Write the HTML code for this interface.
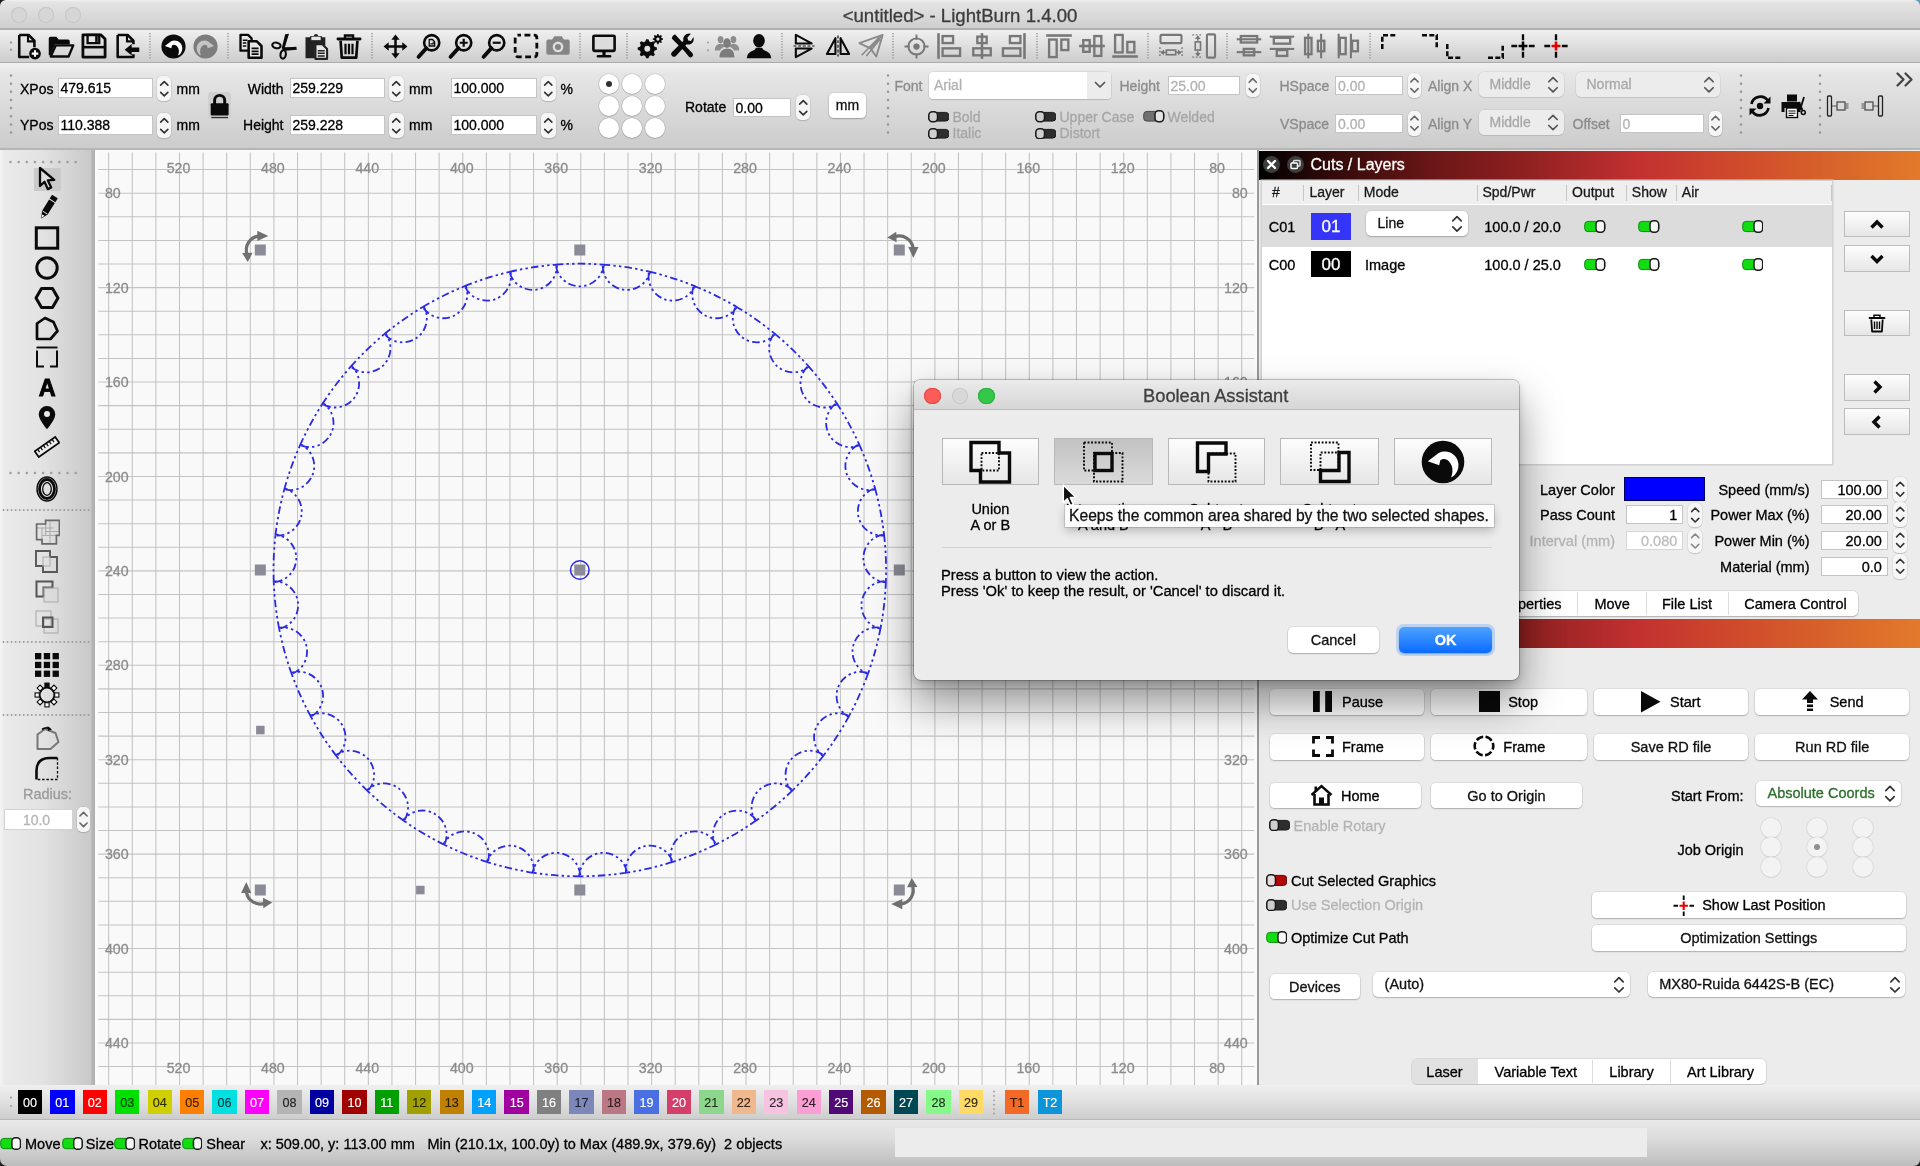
<!DOCTYPE html>
<html lang="en"><head><meta charset="utf-8"><title>&lt;untitled&gt; - LightBurn 1.4.00</title>
<style>
html,body{margin:0;padding:0;}
body{width:1920px;height:1166px;overflow:hidden;background:#ececec;font-family:"Liberation Sans",sans-serif;font-size:14px;color:#000;position:relative;}
#root{position:absolute;left:0;top:0;width:1920px;height:1166px;overflow:hidden;will-change:transform;transform:translateZ(0);}
#root div,#root svg{position:absolute;}
.t{white-space:nowrap;-webkit-text-stroke:0.3px currentColor;}
</style></head>
<body><div id="root">
<div style="left:0px;top:0px;width:1920px;height:28.5px;background:linear-gradient(#f2f2f2 0,#e4e4e4 2px,#d0d0d0 27px);"></div>
<div style="left:0px;top:28.3px;width:1920px;height:1.5px;background:#b0b0b0;"></div>
<div style="left:10.75px;top:7px;width:16px;height:16px;border-radius:50%;background:#d6d6d6;box-shadow:inset 0 0 0 1px #c6c6c6;"></div>
<div style="left:38.25px;top:7px;width:16px;height:16px;border-radius:50%;background:#d6d6d6;box-shadow:inset 0 0 0 1px #c6c6c6;"></div>
<div style="left:65.2px;top:7px;width:16px;height:16px;border-radius:50%;background:#d6d6d6;box-shadow:inset 0 0 0 1px #c6c6c6;"></div>
<div class="t" style="top:3.5px;height:24px;line-height:24px;font-size:18.6px;color:#3c3c3c;left:660px;width:600px;text-align:center;">&lt;untitled&gt; - LightBurn 1.4.00</div>
<div style="left:0px;top:29.8px;width:1920px;height:32.2px;background:linear-gradient(#efefef,#e4e4e4 35%,#cdcdcd);"></div>
<div style="left:0px;top:61.8px;width:1920px;height:1.3px;background:#ababab;"></div>
<div style="left:0px;top:63.1px;width:1920px;height:85px;background:linear-gradient(#f1f1f1 0,#e6e6e6 12%,#cccccc 100%);"></div>
<div style="left:0px;top:148px;width:1920px;height:2px;background:#b6b6b6;"></div>
<svg style="left:8.8px;top:40.7px;" width="4" height="10.4" viewBox="0 0 4 10.4"><circle cx="2" cy="1.5" r="1.2" fill="#a0a0a0"/><circle cx="2" cy="8.8" r="1.2" fill="#a0a0a0"/></svg>
<svg style="left:14px;top:32px;" width="28" height="28" viewBox="0 0 24 24"><path d="M4.5 2.5h8l5 5v5.5" fill="none" stroke="#0a0a0a" stroke-width="2.2" stroke-linejoin="round"/><path d="M4.5 2.5v19h8.5" fill="none" stroke="#0a0a0a" stroke-width="2.2" stroke-linejoin="round"/><path d="M12 2.5v5.5h5.5" fill="none" stroke="#0a0a0a" stroke-width="1.8"/><circle cx="18" cy="18.5" r="5" fill="#0a0a0a"/><path d="M18 15.7v5.6M15.2 18.5h5.6" stroke="#fff" stroke-width="1.8"/></svg>
<svg style="left:47px;top:32px;" width="28" height="28" viewBox="0 0 24 24"><path d="M1.5 20V5.5q0-1.5 1.5-1.5h5l2 2.5h8q1.5 0 1.5 1.5v2.5H7L3 20z" fill="#0a0a0a"/><path d="M7.5 11.5h15L18.5 21H3.2z" fill="none" stroke="#0a0a0a" stroke-width="2" stroke-linejoin="round"/></svg>
<svg style="left:80px;top:32px;" width="28" height="28" viewBox="0 0 24 24"><path d="M2.5 2.5h15.5l3.5 3.5v15.5h-19z" fill="none" stroke="#0a0a0a" stroke-width="2.4" stroke-linejoin="round"/><path d="M6.5 2.5h10v7h-10z" fill="none" stroke="#0a0a0a" stroke-width="2"/><rect x="13" y="3.5" width="2.2" height="5" fill="#0a0a0a"/><path d="M3 13h18" stroke="#0a0a0a" stroke-width="2.2"/></svg>
<svg style="left:113px;top:32px;" width="28" height="28" viewBox="0 0 24 24"><path d="M4 2.5h8.5l5 5v3" fill="none" stroke="#0a0a0a" stroke-width="2.2" stroke-linejoin="round"/><path d="M4 2.5v19h13.5v-2.5" fill="none" stroke="#0a0a0a" stroke-width="2.2" stroke-linejoin="round"/><path d="M12 2.5v5.5h5.5" fill="none" stroke="#0a0a0a" stroke-width="1.8"/><path d="M10 15.2l6-5v3h6.5v4H16v3z" fill="#0a0a0a"/></svg>
<svg style="left:148.5px;top:33px;" width="2" height="26" viewBox="0 0 2 26"><path d="M1 0v26" stroke="#8e8e8e" stroke-width="1.300" stroke-dasharray="1.200 1.500"/></svg>
<svg style="left:160.5px;top:33.5px;" width="25" height="25" viewBox="0 0 24 24"><circle cx="12" cy="12" r="11.600" fill="#0a0a0a"/><path d="M3.71 11.62L9.44 7.20C12.00 5.73 16.09 6.00 18.55 8.73C20.73 11.18 21.00 14.73 19.64 17.18C18.82 18.82 17.73 19.91 16.42 20.51C17.18 18.55 17.45 16.36 16.80 14.24C16.09 12.00 14.45 10.47 12.76 10.31C12.00 10.25 11.18 10.53 10.53 11.02L9.93 13.75Z" fill="#fff"/></svg>
<svg style="left:193px;top:33.5px;" width="25" height="25" viewBox="0 0 24 24"><circle cx="12" cy="12" r="11.600" fill="#7d7d7d"/><path d="M20.29 11.62 L14.56 7.20 C12.00 5.73 7.91 6.00 5.45 8.73 C3.27 11.18 3.00 14.73 4.36 17.18 C5.18 18.82 6.27 19.91 7.58 20.51 C6.82 18.55 6.55 16.36 7.20 14.24 C7.91 12.00 9.55 10.47 11.24 10.31 C12.00 10.25 12.82 10.53 13.47 11.02 L14.07 13.75 Z" fill="#c4c4c4"/></svg>
<svg style="left:227px;top:33px;" width="2" height="26" viewBox="0 0 2 26"><path d="M1 0v26" stroke="#8e8e8e" stroke-width="1.300" stroke-dasharray="1.200 1.500"/></svg>
<svg style="left:237px;top:32px;" width="28" height="28" viewBox="0 0 24 24"><path d="M3 2.5h6.5l3 3V16H3z" fill="#e6e6e6" stroke="#0a0a0a" stroke-width="2" stroke-linejoin="round"/><path d="M10 8h7l4 4v10H10z" fill="#e6e6e6" stroke="#0a0a0a" stroke-width="2.2" stroke-linejoin="round"/><path d="M12.5 14h6M12.5 16.5h6M12.5 19h6" stroke="#0a0a0a" stroke-width="1.5"/><path d="M5 7h4M5 9.5h3M5 12h3" stroke="#0a0a0a" stroke-width="1.3"/></svg>
<svg style="left:270px;top:32px;" width="28" height="28" viewBox="0 0 24 24"><path d="M15.5 1.5 L12.5 13 L10.5 13.5 z" fill="#0a0a0a"/><path d="M22.5 13.5 L11 15.2 L10.5 13 z" fill="#0a0a0a"/><path d="M13 2 L16.3 1.6 L12.2 14.5 L10 14 z" fill="#0a0a0a"/><path d="M22.6 12.6 L23 15.3 L11 16.2 L10.5 13.5 z" fill="#0a0a0a"/><ellipse cx="5.5" cy="11.5" rx="3.6" ry="2.4" fill="none" stroke="#0a0a0a" stroke-width="1.8" transform="rotate(12 5.5 11.5)"/><ellipse cx="11.3" cy="19.2" rx="2.3" ry="3.6" fill="none" stroke="#0a0a0a" stroke-width="1.8" transform="rotate(8 11.3 19.2)"/></svg>
<svg style="left:302px;top:32px;" width="28" height="28" viewBox="0 0 24 24"><path d="M3 4.5h4v-1h3.2a1.8 1.8 0 0 1 3.6 0H17v1h3v7h-9v11H3z" fill="#222"/><rect x="8" y="4" width="8" height="3" fill="#e6e6e6"/><path d="M11.5 10.5h6l4 4V23h-10z" fill="#e6e6e6" stroke="#222" stroke-width="1.8" stroke-linejoin="round"/><path d="M13.5 16h6M13.5 18.3h6M13.5 20.6h6" stroke="#222" stroke-width="1.3"/></svg>
<svg style="left:335px;top:32px;" width="28" height="28" viewBox="0 0 24 24"><path d="M2.5 6h19" stroke="#0a0a0a" stroke-width="2.4" stroke-linecap="round"/><path d="M8.5 5.5v-2.5h7v2.5" fill="none" stroke="#0a0a0a" stroke-width="2"/><path d="M4.8 7.5l1 14.5h12.4l1-14.5" fill="none" stroke="#0a0a0a" stroke-width="2.3" stroke-linejoin="round"/><path d="M9 10v9M12 10v9M15 10v9" stroke="#0a0a0a" stroke-width="1.9"/></svg>
<svg style="left:370.5px;top:33px;" width="2" height="26" viewBox="0 0 2 26"><path d="M1 0v26" stroke="#8e8e8e" stroke-width="1.300" stroke-dasharray="1.200 1.500"/></svg>
<svg style="left:382.5px;top:33.5px;" width="25" height="25" viewBox="0 0 24 24"><path d="M12 3.5v17M3.5 12h17" stroke="#0a0a0a" stroke-width="2.4"/><path d="M12 0.5l4 5h-8zM12 23.5l4-5h-8zM0.5 12l5-4v8zM23.5 12l-5-4v8z" fill="#0a0a0a"/></svg>
<svg style="left:415.5px;top:33px;" width="26" height="26" viewBox="0 0 24 24"><circle cx="14.5" cy="9" r="7" fill="none" stroke="#0a0a0a" stroke-width="2.4"/><path d="M9.5 14l-7 8" stroke="#0a0a0a" stroke-width="3.6" stroke-linecap="round"/><path d="M12.2 6h3l2 2v4h-5z" fill="none" stroke="#0a0a0a" stroke-width="1.2"/><path d="M13.3 10h2.6v-2" fill="none" stroke="#0a0a0a" stroke-width="1"/></svg>
<svg style="left:448px;top:33px;" width="26" height="26" viewBox="0 0 24 24"><circle cx="14.5" cy="9" r="7" fill="none" stroke="#0a0a0a" stroke-width="2.4"/><path d="M9.5 14l-7 8" stroke="#0a0a0a" stroke-width="3.6" stroke-linecap="round"/><path d="M10.8 9h7.4M14.5 5.3v7.4" stroke="#0a0a0a" stroke-width="2"/></svg>
<svg style="left:480.5px;top:33px;" width="26" height="26" viewBox="0 0 24 24"><circle cx="14.5" cy="9" r="7" fill="none" stroke="#0a0a0a" stroke-width="2.4"/><path d="M9.5 14l-7 8" stroke="#0a0a0a" stroke-width="3.6" stroke-linecap="round"/><path d="M10.8 9h7.4" stroke="#0a0a0a" stroke-width="2"/></svg>
<svg style="left:512.7px;top:33px;" width="26" height="26" viewBox="0 0 24 24"><rect x="2" y="2" width="20" height="20" rx="2.5" fill="none" stroke="#0a0a0a" stroke-width="2.6" stroke-dasharray="5.4 3.2" stroke-dashoffset="2.5"/></svg>
<svg style="left:544px;top:32px;" width="28" height="28" viewBox="0 0 24 24"><path d="M2 8q0-1.5 1.5-1.5H7l1.8-2.8h6.4L17 6.5h3.5Q22 6.500 22 8v10q0 1.500 -1.500 1.500h-17Q2 19.500 2 18z" fill="#858585"/><circle cx="12" cy="12.8" r="4.6" fill="#dedede"/><circle cx="12" cy="12.8" r="2.6" fill="#858585"/></svg>
<svg style="left:579px;top:33px;" width="2" height="26" viewBox="0 0 2 26"><path d="M1 0v26" stroke="#8e8e8e" stroke-width="1.300" stroke-dasharray="1.200 1.500"/></svg>
<svg style="left:590.8px;top:33px;" width="26" height="26" viewBox="0 0 24 24"><rect x="2.2" y="2.500" width="19.6" height="14" rx="1" fill="#dcdcdc" stroke="#0a0a0a" stroke-width="2.4"/><path d="M12 17v3.500" stroke="#0a0a0a" stroke-width="3"/><path d="M6.500 21.500h11" stroke="#0a0a0a" stroke-width="2.4" stroke-linecap="round"/></svg>
<svg style="left:625.5px;top:33px;" width="2" height="26" viewBox="0 0 2 26"><path d="M1 0v26" stroke="#8e8e8e" stroke-width="1.300" stroke-dasharray="1.200 1.500"/></svg>
<svg style="left:636.5px;top:33px;" width="26" height="26" viewBox="0 0 24 24"><path d="M18.34 13.45 L18.34 15.55 L16.14 16.37 L15.52 17.87 L16.49 20.01 L15.01 21.49 L12.87 20.52 L11.37 21.14 L10.55 23.34 L8.45 23.34 L7.63 21.14 L6.13 20.52 L3.99 21.49 L2.51 20.01 L3.48 17.87 L2.86 16.37 L0.66 15.55 L0.66 13.45 L2.86 12.63 L3.48 11.13 L2.51 8.99 L3.99 7.51 L6.13 8.48 L7.63 7.86 L8.45 5.66 L10.55 5.66 L11.37 7.86 L12.87 8.48 L15.01 7.51 L16.49 8.99 L15.52 11.13 L16.14 12.63z" fill="#0a0a0a"/><circle cx="9.5" cy="14.5" r="2.7" fill="#e0e0e0"/><path d="M23.97 5.05 L23.97 6.15 L22.67 6.55 L22.35 7.31 L22.99 8.51 L22.21 9.29 L21.01 8.65 L20.25 8.97 L19.85 10.27 L18.75 10.27 L18.35 8.97 L17.59 8.65 L16.39 9.29 L15.61 8.51 L16.25 7.31 L15.93 6.55 L14.63 6.15 L14.63 5.05 L15.93 4.65 L16.25 3.89 L15.61 2.69 L16.39 1.91 L17.59 2.55 L18.35 2.23 L18.75 0.93 L19.85 0.93 L20.25 2.23 L21.01 2.55 L22.21 1.91 L22.99 2.69 L22.35 3.89 L22.67 4.65z" fill="#0a0a0a"/><circle cx="19.3" cy="5.6" r="1.5" fill="#e0e0e0"/></svg>
<svg style="left:668px;top:32px;" width="28" height="28" viewBox="0 0 24 24"><path d="M4 3.500l2-1.500 11.500 12.500 3.500 3.800q1.200 1.700 -0.300 3t-3-0.300L14.500 17 3.200 5.500z" fill="#0a0a0a"/><path d="M21.800 4.200q1 3.800-1.800 5.800-1.800 1.200-4 0.600L6.800 20.500q-1.600 1.600-3.300 0t0-3.300L13.200 7.500q-0.600-2.800 1.200-4.700 2.200-2 5.200-1.200l-3 3.400 0.800 2.200 2.300 0.500z" fill="#0a0a0a"/></svg>
<svg style="left:706px;top:40.5px;" width="4" height="11" viewBox="0 0 4 11"><circle cx="2" cy="1.5" r="1.1" fill="#a0a0a0"/><circle cx="2" cy="9.3" r="1.1" fill="#a0a0a0"/></svg>
<svg style="left:713px;top:32px;" width="28" height="28" viewBox="0 0 24 24"><ellipse cx="6.5" cy="6.5" rx="2.465" ry="3.145" fill="#8e8e8e"/><path d="M1.5700000000000003 15.85 q0 -5.5249999999999995 4.93 -5.779999999999999 q4.93 0 4.93 5.779999999999999 z" fill="#8e8e8e"/><ellipse cx="17.5" cy="6.5" rx="2.465" ry="3.145" fill="#8e8e8e"/><path d="M12.57 15.85 q0 -5.5249999999999995 4.93 -5.779999999999999 q4.93 0 4.93 5.779999999999999 z" fill="#8e8e8e"/><path d="M5.500 21.500q0-8 6.500-8.500q6.500 0.500 6.500 8.500z" fill="#dcdcdc" stroke="#dcdcdc" stroke-width="1.600"/><ellipse cx="12" cy="9.5" rx="3.248" ry="4.144000000000001" fill="#7c7c7c"/><path d="M5.504 21.82 q0 -7.280000000000001 6.496 -7.6160000000000005 q6.496 0 6.496 7.6160000000000005 z" fill="#7c7c7c"/></svg>
<svg style="left:745px;top:32px;" width="28" height="28" viewBox="0 0 24 24"><ellipse cx="12" cy="7.500" rx="5" ry="5.800" fill="#0a0a0a"/><path d="M1.500 22.500q0-5 6.500-7l1.500-2h5l1.500 2q6.500 2 6.500 7z" fill="#0a0a0a"/></svg>
<svg style="left:781px;top:33px;" width="2" height="26" viewBox="0 0 2 26"><path d="M1 0v26" stroke="#8e8e8e" stroke-width="1.300" stroke-dasharray="1.200 1.500"/></svg>
<svg style="left:790px;top:32px;" width="28" height="28" viewBox="0 0 24 24"><path d="M5 2.500l13.500 7.300h-13.500z" fill="none" stroke="#0a0a0a" stroke-width="1.800" stroke-linejoin="round"/><path d="M5 21.500l13.500-7.300h-13.500z" fill="none" stroke="#0a0a0a" stroke-width="1.800" stroke-linejoin="round"/><path d="M3 12h18" stroke="#0a0a0a" stroke-width="1" stroke-dasharray="2.500 1.500"/></svg>
<svg style="left:824px;top:32px;" width="28" height="28" viewBox="0 0 24 24"><path d="M2.500 18.800l7.300-13.500v13.500z" fill="none" stroke="#0a0a0a" stroke-width="1.800" stroke-linejoin="round"/><path d="M21.500 18.800l-7.300-13.500v13.500z" fill="none" stroke="#0a0a0a" stroke-width="1.800" stroke-linejoin="round"/><path d="M12 3v18" stroke="#0a0a0a" stroke-width="1" stroke-dasharray="2.500 1.500"/></svg>
<svg style="left:857px;top:32px;" width="28" height="28" viewBox="0 0 24 24"><path d="M2 9.500L22 2.500 16.500 21 11.500 14z" fill="none" stroke="#8a8a8a" stroke-width="1.600" stroke-linejoin="round"/><path d="M22 2.500L11.500 14M19 4.500L4 20M20 6L8 20.500" stroke="#8a8a8a" stroke-width="1.300"/></svg>
<svg style="left:892px;top:33px;" width="2" height="26" viewBox="0 0 2 26"><path d="M1 0v26" stroke="#8e8e8e" stroke-width="1.300" stroke-dasharray="1.200 1.500"/></svg>
<svg style="left:903.8px;top:33.5px;" width="25" height="25" viewBox="0 0 24 24"><circle cx="12" cy="12" r="7.800" fill="none" stroke="#777" stroke-width="1.800"/><circle cx="12" cy="12" r="3" fill="#777"/><path d="M12 0.500v5M12 18.500v5M0.500 12h5M18.500 12h5" stroke="#777" stroke-width="1.800"/></svg>
<svg style="left:935px;top:32px;" width="28" height="28" viewBox="0 0 24 24"><path d="M3 1v22" stroke="#777" stroke-width="2.200"/><rect x="6.5" y="3.5" width="9" height="6" fill="none" stroke="#777" stroke-width="2"/><rect x="6.5" y="14" width="15" height="6.5" fill="none" stroke="#777" stroke-width="2"/></svg>
<svg style="left:968px;top:32px;" width="28" height="28" viewBox="0 0 24 24"><path d="M12 1v22" stroke="#777" stroke-width="2.200"/><rect x="8" y="4" width="8" height="5.5" fill="none" stroke="#777" stroke-width="2"/><rect x="4.5" y="14" width="15" height="6" fill="none" stroke="#777" stroke-width="2"/></svg>
<svg style="left:1000px;top:32px;" width="28" height="28" viewBox="0 0 24 24"><path d="M21 1v22" stroke="#777" stroke-width="2.200"/><rect x="8.5" y="3.5" width="9" height="6" fill="none" stroke="#777" stroke-width="2"/><rect x="2.5" y="14" width="15" height="6.5" fill="none" stroke="#777" stroke-width="2"/></svg>
<svg style="left:1035.5px;top:33px;" width="2" height="26" viewBox="0 0 2 26"><path d="M1 0v26" stroke="#8e8e8e" stroke-width="1.300" stroke-dasharray="1.200 1.500"/></svg>
<svg style="left:1045px;top:32px;" width="28" height="28" viewBox="0 0 24 24"><path d="M1 3h22" stroke="#777" stroke-width="2.200"/><rect x="3.5" y="6.5" width="6.5" height="15" fill="none" stroke="#777" stroke-width="2"/><rect x="14" y="6.5" width="6" height="9" fill="none" stroke="#777" stroke-width="2"/></svg>
<svg style="left:1078px;top:32px;" width="28" height="28" viewBox="0 0 24 24"><path d="M1 12h22" stroke="#777" stroke-width="2.200"/><rect x="4.5" y="7" width="5.5" height="10" fill="none" stroke="#777" stroke-width="2"/><rect x="14" y="3.5" width="6" height="17" fill="none" stroke="#777" stroke-width="2"/></svg>
<svg style="left:1111px;top:32px;" width="28" height="28" viewBox="0 0 24 24"><path d="M1 21h22" stroke="#777" stroke-width="2.200"/><rect x="3.5" y="2.5" width="6.5" height="15" fill="none" stroke="#777" stroke-width="2"/><rect x="14" y="8.5" width="6" height="9" fill="none" stroke="#777" stroke-width="2"/></svg>
<svg style="left:1146.5px;top:33px;" width="2" height="26" viewBox="0 0 2 26"><path d="M1 0v26" stroke="#8e8e8e" stroke-width="1.300" stroke-dasharray="1.200 1.500"/></svg>
<svg style="left:1157px;top:32px;" width="28" height="28" viewBox="0 0 24 24"><rect x="3" y="2.500" width="18" height="7" rx="1" fill="none" stroke="#777" stroke-width="1.800"/><path d="M2.500 13v9M21.500 13v9" stroke="#777" stroke-width="1.200" stroke-dasharray="1.500 1.500"/><rect x="8" y="15.500" width="8" height="4" fill="none" stroke="#777" stroke-width="1.400"/><path d="M3.500 17.500h4M20.500 17.500h-4" stroke="#777" stroke-width="1.400"/><path d="M3 17.500l3-2.500v5zM21 17.500l-3-2.500v5z" fill="#777"/></svg>
<svg style="left:1190px;top:32px;" width="28" height="28" viewBox="0 0 24 24"><rect x="14.500" y="2" width="7" height="20" rx="1" fill="none" stroke="#777" stroke-width="1.800"/><path d="M2 2.500h9M2 21.500h9" stroke="#777" stroke-width="1.200" stroke-dasharray="1.500 1.500"/><rect x="4.500" y="8.500" width="4.500" height="7" fill="none" stroke="#777" stroke-width="1.400"/><path d="M6.700 3.500v4M6.700 20.500v-4" stroke="#777" stroke-width="1.400"/><path d="M6.700 3l-2.500 3h5zM6.700 21l-2.500-3h5z" fill="#777"/></svg>
<svg style="left:1225.5px;top:33px;" width="2" height="26" viewBox="0 0 2 26"><path d="M1 0v26" stroke="#8e8e8e" stroke-width="1.300" stroke-dasharray="1.200 1.500"/></svg>
<svg style="left:1235px;top:32px;" width="28" height="28" viewBox="0 0 24 24"><rect x="5" y="3.5" width="14" height="5.5" fill="none" stroke="#777" stroke-width="2"/><rect x="7.5" y="14.5" width="9" height="5.5" fill="none" stroke="#777" stroke-width="2"/><path d="M1.500 6.250h21" stroke="#777" stroke-width="1.800"/><path d="M1.500 17.250h21" stroke="#777" stroke-width="1.800"/></svg>
<svg style="left:1268px;top:32px;" width="28" height="28" viewBox="0 0 24 24"><rect x="5" y="5" width="14" height="5" fill="none" stroke="#777" stroke-width="2"/><rect x="7.5" y="15.5" width="9" height="5" fill="none" stroke="#777" stroke-width="2"/><path d="M1.500 4h21" stroke="#777" stroke-width="1.800"/><path d="M1.500 14.500h21" stroke="#777" stroke-width="1.800"/></svg>
<svg style="left:1301px;top:32px;" width="28" height="28" viewBox="0 0 24 24"><rect x="3.5" y="5" width="5.5" height="14" fill="none" stroke="#777" stroke-width="2"/><rect x="14.5" y="7.5" width="5.5" height="9" fill="none" stroke="#777" stroke-width="2"/><path d="M6.250 1.500v21" stroke="#777" stroke-width="1.800"/><path d="M17.250 1.500v21" stroke="#777" stroke-width="1.800"/></svg>
<svg style="left:1333.5px;top:32px;" width="28" height="28" viewBox="0 0 24 24"><rect x="5" y="5" width="5" height="14" fill="none" stroke="#777" stroke-width="2"/><rect x="15.5" y="7.5" width="5" height="9" fill="none" stroke="#777" stroke-width="2"/><path d="M4 1.500v21" stroke="#777" stroke-width="1.800"/><path d="M14.500 1.500v21" stroke="#777" stroke-width="1.800"/></svg>
<svg style="left:1368.5px;top:33px;" width="2" height="26" viewBox="0 0 2 26"><path d="M1 0v26" stroke="#8e8e8e" stroke-width="1.300" stroke-dasharray="1.200 1.500"/></svg>
<svg style="left:1509.3px;top:32px;" width="28" height="28" viewBox="0 0 24 24"><path d="M12 2v5M12 17v5M2 12h5M17 12h5" stroke="#0a0a0a" stroke-width="2"/><path d="M12 8.200v7.600M8.200 12h7.600" stroke="#000" stroke-width="2.200"/></svg>
<svg style="left:1541.7px;top:32px;" width="28" height="28" viewBox="0 0 24 24"><path d="M12 2v5M12 17v5M2 12h5M17 12h5" stroke="#0a0a0a" stroke-width="2"/><path d="M12 8.200v7.600M8.200 12h7.600" stroke="#e00000" stroke-width="2.200"/></svg>
<svg style="left:1381px;top:34px;" width="16" height="15" viewBox="0 0 16 15"><path d="M1.200 15V1.200H16" fill="none" stroke="#0a0a0a" stroke-width="2.700" stroke-dasharray="5 2.300"/></svg>
<svg style="left:1422px;top:34px;" width="16" height="15" viewBox="0 0 16 15"><path d="M0 1.200H14.800V15" fill="none" stroke="#0a0a0a" stroke-width="2.700" stroke-dasharray="5 2.300"/></svg>
<svg style="left:1445.5px;top:43.5px;" width="16" height="15" viewBox="0 0 16 15"><path d="M1.200 0V13.800H16" fill="none" stroke="#0a0a0a" stroke-width="2.700" stroke-dasharray="5 2.300"/></svg>
<svg style="left:1488px;top:43.5px;" width="16" height="15" viewBox="0 0 16 15"><path d="M0 13.800H14.800V0" fill="none" stroke="#0a0a0a" stroke-width="2.700" stroke-dasharray="5 2.300"/></svg>
<svg style="left:8.5px;top:74.3px;" width="4" height="60.2" viewBox="0 0 4 60.2"><circle cx="2" cy="1.5" r="1.25" fill="#969696"/><circle cx="2" cy="9.65" r="1.25" fill="#969696"/><circle cx="2" cy="17.8" r="1.25" fill="#969696"/><circle cx="2" cy="25.95" r="1.25" fill="#969696"/><circle cx="2" cy="34.1" r="1.25" fill="#969696"/><circle cx="2" cy="42.25" r="1.25" fill="#969696"/><circle cx="2" cy="50.4" r="1.25" fill="#969696"/><circle cx="2" cy="58.55" r="1.25" fill="#969696"/></svg>
<div class="t" style="top:78.5px;height:20px;line-height:20px;font-size:14px;color:#000;left:20px;">XPos</div>
<div style="left:57.5px;top:78px;width:95px;height:19.5px;background:#fff;border:1px solid #c4c4c4;box-sizing:border-box;"></div>
<div class="t" style="top:78.25px;height:20px;line-height:20px;font-size:14px;color:#000;left:60.5px;">479.615</div>
<div style="left:156.5px;top:75.5px;width:14.5px;height:25.5px;background:#f6f6f6;border-radius:5px;box-shadow:0 0 0 0.5px rgba(0,0,0,0.10), 0 1px 1px rgba(0,0,0,0.12);"></div>
<svg style="left:156.5px;top:75.5px;" width="14.5" height="25.5" viewBox="0 0 14.5 25.5"><path d="M3.65 9.18 l3.6 -3.6 l3.6 3.6" fill="none" stroke="#333" stroke-width="1.6" stroke-linecap="round" stroke-linejoin="round"/><path d="M3.65 16.32 l3.6 3.6 l3.6 -3.6" fill="none" stroke="#333" stroke-width="1.6" stroke-linecap="round" stroke-linejoin="round"/></svg>
<div class="t" style="top:78.5px;height:20px;line-height:20px;font-size:14px;color:#000;left:176.5px;">mm</div>
<div class="t" style="top:115px;height:20px;line-height:20px;font-size:14px;color:#000;left:20px;">YPos</div>
<div style="left:57.5px;top:115px;width:95px;height:19.5px;background:#fff;border:1px solid #c4c4c4;box-sizing:border-box;"></div>
<div class="t" style="top:115.25px;height:20px;line-height:20px;font-size:14px;color:#000;left:60.5px;">110.388</div>
<div style="left:156.5px;top:112.5px;width:14.5px;height:25.5px;background:#f6f6f6;border-radius:5px;box-shadow:0 0 0 0.5px rgba(0,0,0,0.10), 0 1px 1px rgba(0,0,0,0.12);"></div>
<svg style="left:156.5px;top:112.5px;" width="14.5" height="25.5" viewBox="0 0 14.5 25.5"><path d="M3.65 9.18 l3.6 -3.6 l3.6 3.6" fill="none" stroke="#333" stroke-width="1.6" stroke-linecap="round" stroke-linejoin="round"/><path d="M3.65 16.32 l3.6 3.6 l3.6 -3.6" fill="none" stroke="#333" stroke-width="1.6" stroke-linecap="round" stroke-linejoin="round"/></svg>
<div class="t" style="top:115px;height:20px;line-height:20px;font-size:14px;color:#000;left:176.5px;">mm</div>
<div style="left:208px;top:92px;width:23px;height:27px;background:#d0d0d0;border-radius:3px;"></div>
<svg style="left:208.8px;top:92.3px;" width="21.3" height="26.9" viewBox="0 0 19 24"><path d="M5 11V7.500a4.500 4.500 0 0 1 9 0V11" fill="none" stroke="#0a0a0a" stroke-width="2.600"/><rect x="1.500" y="10" width="16" height="11" rx="1" fill="#0a0a0a"/><path d="M2 22.800h15" stroke="#333" stroke-width="1.200"/></svg>
<div class="t" style="top:78.5px;height:20px;line-height:20px;font-size:14px;color:#000;left:-316.5px;width:600px;text-align:right;">Width</div>
<div style="left:289.5px;top:78px;width:95px;height:19.5px;background:#fff;border:1px solid #c4c4c4;box-sizing:border-box;"></div>
<div class="t" style="top:78.25px;height:20px;line-height:20px;font-size:14px;color:#000;left:292.5px;">259.229</div>
<div style="left:389px;top:75.5px;width:14.5px;height:25.5px;background:#f6f6f6;border-radius:5px;box-shadow:0 0 0 0.5px rgba(0,0,0,0.10), 0 1px 1px rgba(0,0,0,0.12);"></div>
<svg style="left:389px;top:75.5px;" width="14.5" height="25.5" viewBox="0 0 14.5 25.5"><path d="M3.65 9.18 l3.6 -3.6 l3.6 3.6" fill="none" stroke="#333" stroke-width="1.6" stroke-linecap="round" stroke-linejoin="round"/><path d="M3.65 16.32 l3.6 3.6 l3.6 -3.6" fill="none" stroke="#333" stroke-width="1.6" stroke-linecap="round" stroke-linejoin="round"/></svg>
<div class="t" style="top:78.5px;height:20px;line-height:20px;font-size:14px;color:#000;left:409px;">mm</div>
<div class="t" style="top:115px;height:20px;line-height:20px;font-size:14px;color:#000;left:-316.5px;width:600px;text-align:right;">Height</div>
<div style="left:289.5px;top:115px;width:95px;height:19.5px;background:#fff;border:1px solid #c4c4c4;box-sizing:border-box;"></div>
<div class="t" style="top:115.25px;height:20px;line-height:20px;font-size:14px;color:#000;left:292.5px;">259.228</div>
<div style="left:389px;top:112.5px;width:14.5px;height:25.5px;background:#f6f6f6;border-radius:5px;box-shadow:0 0 0 0.5px rgba(0,0,0,0.10), 0 1px 1px rgba(0,0,0,0.12);"></div>
<svg style="left:389px;top:112.5px;" width="14.5" height="25.5" viewBox="0 0 14.5 25.5"><path d="M3.65 9.18 l3.6 -3.6 l3.6 3.6" fill="none" stroke="#333" stroke-width="1.6" stroke-linecap="round" stroke-linejoin="round"/><path d="M3.65 16.32 l3.6 3.6 l3.6 -3.6" fill="none" stroke="#333" stroke-width="1.6" stroke-linecap="round" stroke-linejoin="round"/></svg>
<div class="t" style="top:115px;height:20px;line-height:20px;font-size:14px;color:#000;left:409px;">mm</div>
<div style="left:450.5px;top:78px;width:86px;height:19.5px;background:#fff;border:1px solid #c4c4c4;box-sizing:border-box;"></div>
<div class="t" style="top:78.25px;height:20px;line-height:20px;font-size:14px;color:#000;left:453.5px;">100.000</div>
<div style="left:541px;top:75.5px;width:14.5px;height:25.5px;background:#f6f6f6;border-radius:5px;box-shadow:0 0 0 0.5px rgba(0,0,0,0.10), 0 1px 1px rgba(0,0,0,0.12);"></div>
<svg style="left:541px;top:75.5px;" width="14.5" height="25.5" viewBox="0 0 14.5 25.5"><path d="M3.65 9.18 l3.6 -3.6 l3.6 3.6" fill="none" stroke="#333" stroke-width="1.6" stroke-linecap="round" stroke-linejoin="round"/><path d="M3.65 16.32 l3.6 3.6 l3.6 -3.6" fill="none" stroke="#333" stroke-width="1.6" stroke-linecap="round" stroke-linejoin="round"/></svg>
<div class="t" style="top:78.5px;height:20px;line-height:20px;font-size:14px;color:#000;left:560.5px;">%</div>
<div style="left:450.5px;top:115px;width:86px;height:19.5px;background:#fff;border:1px solid #c4c4c4;box-sizing:border-box;"></div>
<div class="t" style="top:115.25px;height:20px;line-height:20px;font-size:14px;color:#000;left:453.5px;">100.000</div>
<div style="left:541px;top:112.5px;width:14.5px;height:25.5px;background:#f6f6f6;border-radius:5px;box-shadow:0 0 0 0.5px rgba(0,0,0,0.10), 0 1px 1px rgba(0,0,0,0.12);"></div>
<svg style="left:541px;top:112.5px;" width="14.5" height="25.5" viewBox="0 0 14.5 25.5"><path d="M3.65 9.18 l3.6 -3.6 l3.6 3.6" fill="none" stroke="#333" stroke-width="1.6" stroke-linecap="round" stroke-linejoin="round"/><path d="M3.65 16.32 l3.6 3.6 l3.6 -3.6" fill="none" stroke="#333" stroke-width="1.6" stroke-linecap="round" stroke-linejoin="round"/></svg>
<div class="t" style="top:115px;height:20px;line-height:20px;font-size:14px;color:#000;left:560.5px;">%</div>
<div style="left:599px;top:73.75px;width:20px;height:20px;border-radius:50%;background:#fff;box-shadow:0 0 0 0.600px rgba(0,0,0,0.16),0 1px 1px rgba(0,0,0,0.10);"></div>
<div style="left:622px;top:73.75px;width:20px;height:20px;border-radius:50%;background:#fff;box-shadow:0 0 0 0.600px rgba(0,0,0,0.16),0 1px 1px rgba(0,0,0,0.10);"></div>
<div style="left:645px;top:73.75px;width:20px;height:20px;border-radius:50%;background:#fff;box-shadow:0 0 0 0.600px rgba(0,0,0,0.16),0 1px 1px rgba(0,0,0,0.10);"></div>
<div style="left:599px;top:95.75px;width:20px;height:20px;border-radius:50%;background:#fff;box-shadow:0 0 0 0.600px rgba(0,0,0,0.16),0 1px 1px rgba(0,0,0,0.10);"></div>
<div style="left:622px;top:95.75px;width:20px;height:20px;border-radius:50%;background:#fff;box-shadow:0 0 0 0.600px rgba(0,0,0,0.16),0 1px 1px rgba(0,0,0,0.10);"></div>
<div style="left:645px;top:95.75px;width:20px;height:20px;border-radius:50%;background:#fff;box-shadow:0 0 0 0.600px rgba(0,0,0,0.16),0 1px 1px rgba(0,0,0,0.10);"></div>
<div style="left:599px;top:117.5px;width:20px;height:20px;border-radius:50%;background:#fff;box-shadow:0 0 0 0.600px rgba(0,0,0,0.16),0 1px 1px rgba(0,0,0,0.10);"></div>
<div style="left:622px;top:117.5px;width:20px;height:20px;border-radius:50%;background:#fff;box-shadow:0 0 0 0.600px rgba(0,0,0,0.16),0 1px 1px rgba(0,0,0,0.10);"></div>
<div style="left:645px;top:117.5px;width:20px;height:20px;border-radius:50%;background:#fff;box-shadow:0 0 0 0.600px rgba(0,0,0,0.16),0 1px 1px rgba(0,0,0,0.10);"></div>
<div style="left:606px;top:80.75px;width:6px;height:6px;border-radius:50%;background:#333;"></div>
<div class="t" style="top:97px;height:20px;line-height:20px;font-size:14px;color:#000;left:685px;">Rotate</div>
<div style="left:732.5px;top:97.5px;width:58.5px;height:19px;background:#fff;border:1px solid #c4c4c4;box-sizing:border-box;"></div>
<div class="t" style="top:97.5px;height:20px;line-height:20px;font-size:14px;color:#000;left:735.5px;">0.00</div>
<div style="left:795.5px;top:94.5px;width:14.5px;height:25.5px;background:#f6f6f6;border-radius:5px;box-shadow:0 0 0 0.5px rgba(0,0,0,0.10), 0 1px 1px rgba(0,0,0,0.12);"></div>
<svg style="left:795.5px;top:94.5px;" width="14.5" height="25.5" viewBox="0 0 14.5 25.5"><path d="M3.65 9.18 l3.6 -3.6 l3.6 3.6" fill="none" stroke="#333" stroke-width="1.6" stroke-linecap="round" stroke-linejoin="round"/><path d="M3.65 16.32 l3.6 3.6 l3.6 -3.6" fill="none" stroke="#333" stroke-width="1.6" stroke-linecap="round" stroke-linejoin="round"/></svg>
<div style="left:829px;top:92.5px;width:37px;height:25px;background:#fff;border-radius:4.5px;box-shadow:0 0 0 0.5px rgba(0,0,0,0.12),0 1px 1.5px rgba(0,0,0,0.22);"></div>
<div class="t" style="top:95.3px;height:20px;line-height:20px;font-size:14px;color:#111;left:547.5px;width:600px;text-align:center;">mm</div>
<svg style="left:886px;top:74.3px;" width="4" height="60.2" viewBox="0 0 4 60.2"><circle cx="2" cy="1.5" r="1.25" fill="#969696"/><circle cx="2" cy="9.65" r="1.25" fill="#969696"/><circle cx="2" cy="17.8" r="1.25" fill="#969696"/><circle cx="2" cy="25.95" r="1.25" fill="#969696"/><circle cx="2" cy="34.1" r="1.25" fill="#969696"/><circle cx="2" cy="42.25" r="1.25" fill="#969696"/><circle cx="2" cy="50.4" r="1.25" fill="#969696"/><circle cx="2" cy="58.55" r="1.25" fill="#969696"/></svg>
<div class="t" style="top:75.5px;height:20px;line-height:20px;font-size:14px;color:#8c8c8c;left:894.5px;">Font</div>
<div style="left:928.5px;top:72px;width:182.5px;height:26.5px;background:#fff;border-radius:4px;box-shadow:0 0 0 0.500px rgba(0,0,0,0.12),0 1px 1px rgba(0,0,0,0.12);overflow:hidden;"><div style="left:158px;top:0;width:25px;height:27px;background:#ececec;"></div></div>
<div class="t" style="top:75px;height:20px;line-height:20px;font-size:14px;color:#b2b2b2;left:934px;">Arial</div>
<svg style="left:1092px;top:79px;" width="16" height="12" viewBox="0 0 16 12"><path d="M3.500 3.500l4.500 4.500 4.500-4.500" fill="none" stroke="#555" stroke-width="1.700" stroke-linecap="round" stroke-linejoin="round"/></svg>
<div class="t" style="top:75.5px;height:20px;line-height:20px;font-size:14px;color:#8c8c8c;left:1119.5px;">Height</div>
<div style="left:1167.5px;top:76px;width:72.5px;height:18.5px;background:#fff;border:1px solid #c4c4c4;box-sizing:border-box;"></div>
<div class="t" style="top:75.75px;height:20px;line-height:20px;font-size:14px;color:#b2b2b2;left:1170.5px;">25.00</div>
<div style="left:1246px;top:73.5px;width:13.5px;height:23px;background:#f6f6f6;border-radius:5px;box-shadow:0 0 0 0.5px rgba(0,0,0,0.10), 0 1px 1px rgba(0,0,0,0.12);"></div>
<svg style="left:1246px;top:73.5px;" width="13.5" height="23" viewBox="0 0 13.5 23"><path d="M3.15 8.28 l3.6 -3.6 l3.6 3.6" fill="none" stroke="#666" stroke-width="1.6" stroke-linecap="round" stroke-linejoin="round"/><path d="M3.15 14.72 l3.6 3.6 l3.6 -3.6" fill="none" stroke="#666" stroke-width="1.6" stroke-linecap="round" stroke-linejoin="round"/></svg>
<div class="t" style="top:75.5px;height:20px;line-height:20px;font-size:14px;color:#8c8c8c;left:1279.5px;">HSpace</div>
<div style="left:1335px;top:75.5px;width:68px;height:19px;background:#fff;border:1px solid #c4c4c4;box-sizing:border-box;"></div>
<div class="t" style="top:75.5px;height:20px;line-height:20px;font-size:14px;color:#b2b2b2;left:1338px;">0.00</div>
<div style="left:1408px;top:73px;width:13px;height:24.5px;background:#f6f6f6;border-radius:5px;box-shadow:0 0 0 0.5px rgba(0,0,0,0.10), 0 1px 1px rgba(0,0,0,0.12);"></div>
<svg style="left:1408px;top:73px;" width="13" height="24.5" viewBox="0 0 13 24.5"><path d="M2.9 8.82 l3.6 -3.6 l3.6 3.6" fill="none" stroke="#666" stroke-width="1.6" stroke-linecap="round" stroke-linejoin="round"/><path d="M2.9 15.68 l3.6 3.6 l3.6 -3.6" fill="none" stroke="#666" stroke-width="1.6" stroke-linecap="round" stroke-linejoin="round"/></svg>
<div class="t" style="top:113.5px;height:20px;line-height:20px;font-size:14px;color:#8c8c8c;left:1280px;">VSpace</div>
<div style="left:1335px;top:113.5px;width:68px;height:19px;background:#fff;border:1px solid #c4c4c4;box-sizing:border-box;"></div>
<div class="t" style="top:113.5px;height:20px;line-height:20px;font-size:14px;color:#b2b2b2;left:1338px;">0.00</div>
<div style="left:1408px;top:111px;width:13px;height:24.5px;background:#f6f6f6;border-radius:5px;box-shadow:0 0 0 0.5px rgba(0,0,0,0.10), 0 1px 1px rgba(0,0,0,0.12);"></div>
<svg style="left:1408px;top:111px;" width="13" height="24.5" viewBox="0 0 13 24.5"><path d="M2.9 8.82 l3.6 -3.6 l3.6 3.6" fill="none" stroke="#666" stroke-width="1.6" stroke-linecap="round" stroke-linejoin="round"/><path d="M2.9 15.68 l3.6 3.6 l3.6 -3.6" fill="none" stroke="#666" stroke-width="1.6" stroke-linecap="round" stroke-linejoin="round"/></svg>
<div class="t" style="top:75.5px;height:20px;line-height:20px;font-size:14px;color:#8c8c8c;left:1428px;">Align X</div>
<div style="left:1478.5px;top:71.5px;width:85px;height:25.5px;background:#ececec;border-radius:5px;box-shadow:0 0 0 0.5px rgba(0,0,0,0.08),0 1px 1px rgba(0,0,0,0.08);"></div>
<div class="t" style="top:73.75px;height:20px;line-height:20px;font-size:14px;color:#a8a8a8;left:1489.5px;">Middle</div>
<svg style="left:1541.5px;top:71.5px;" width="22" height="25.5" viewBox="0 0 22 25.5"><path d="M6.8 9.75 l4.2 -4.2 l4.2 4.2" fill="none" stroke="#555" stroke-width="1.7" stroke-linecap="round" stroke-linejoin="round"/><path d="M6.8 15.75 l4.2 4.2 l4.2 -4.2" fill="none" stroke="#555" stroke-width="1.7" stroke-linecap="round" stroke-linejoin="round"/></svg>
<div class="t" style="top:113.5px;height:20px;line-height:20px;font-size:14px;color:#8c8c8c;left:1428px;">Align Y</div>
<div style="left:1478.5px;top:109.5px;width:85px;height:25px;background:#ececec;border-radius:5px;box-shadow:0 0 0 0.5px rgba(0,0,0,0.08),0 1px 1px rgba(0,0,0,0.08);"></div>
<div class="t" style="top:111.5px;height:20px;line-height:20px;font-size:14px;color:#a8a8a8;left:1489.5px;">Middle</div>
<svg style="left:1541.5px;top:109.5px;" width="22" height="25" viewBox="0 0 22 25"><path d="M6.8 9.5 l4.2 -4.2 l4.2 4.2" fill="none" stroke="#555" stroke-width="1.7" stroke-linecap="round" stroke-linejoin="round"/><path d="M6.8 15.5 l4.2 4.2 l4.2 -4.2" fill="none" stroke="#555" stroke-width="1.7" stroke-linecap="round" stroke-linejoin="round"/></svg>
<div style="left:1575.5px;top:71.5px;width:144px;height:25.5px;background:#ececec;border-radius:5px;box-shadow:0 0 0 0.5px rgba(0,0,0,0.08),0 1px 1px rgba(0,0,0,0.08);"></div>
<div class="t" style="top:73.75px;height:20px;line-height:20px;font-size:14px;color:#a8a8a8;left:1586.5px;">Normal</div>
<svg style="left:1697.5px;top:71.5px;" width="22" height="25.5" viewBox="0 0 22 25.5"><path d="M6.8 9.75 l4.2 -4.2 l4.2 4.2" fill="none" stroke="#555" stroke-width="1.7" stroke-linecap="round" stroke-linejoin="round"/><path d="M6.8 15.75 l4.2 4.2 l4.2 -4.2" fill="none" stroke="#555" stroke-width="1.7" stroke-linecap="round" stroke-linejoin="round"/></svg>
<div class="t" style="top:113.5px;height:20px;line-height:20px;font-size:14px;color:#8c8c8c;left:1572.5px;">Offset</div>
<div style="left:1619.5px;top:113.5px;width:84.5px;height:19px;background:#fff;border:1px solid #c4c4c4;box-sizing:border-box;"></div>
<div class="t" style="top:113.5px;height:20px;line-height:20px;font-size:14px;color:#b2b2b2;left:1622.5px;">0</div>
<div style="left:1709px;top:111px;width:13px;height:24.5px;background:#f6f6f6;border-radius:5px;box-shadow:0 0 0 0.5px rgba(0,0,0,0.10), 0 1px 1px rgba(0,0,0,0.12);"></div>
<svg style="left:1709px;top:111px;" width="13" height="24.5" viewBox="0 0 13 24.5"><path d="M2.9 8.82 l3.6 -3.6 l3.6 3.6" fill="none" stroke="#666" stroke-width="1.6" stroke-linecap="round" stroke-linejoin="round"/><path d="M2.9 15.68 l3.6 3.6 l3.6 -3.6" fill="none" stroke="#666" stroke-width="1.6" stroke-linecap="round" stroke-linejoin="round"/></svg>
<svg style="left:927.5px;top:111px;" width="21.5" height="11.5" viewBox="0 0 21.5 11.5"><rect x="0.700" y="1.400" width="20.1" height="8.7" rx="3.2" fill="#2e2e2e" stroke="#1a1a1a" stroke-width="1"/><rect x="0.8" y="0.800" width="8.72" height="9.9" rx="3.6" fill="#cfcfcf" stroke="#1a1a1a" stroke-width="1.500"/></svg>
<div class="t" style="top:107px;height:20px;line-height:20px;font-size:14px;color:#a6a6a6;left:952.5px;">Bold</div>
<svg style="left:927.5px;top:127.5px;" width="21.5" height="11.5" viewBox="0 0 21.5 11.5"><rect x="0.700" y="1.400" width="20.1" height="8.7" rx="3.2" fill="#2e2e2e" stroke="#1a1a1a" stroke-width="1"/><rect x="0.8" y="0.800" width="8.72" height="9.9" rx="3.6" fill="#cfcfcf" stroke="#1a1a1a" stroke-width="1.500"/></svg>
<div class="t" style="top:123.3px;height:20px;line-height:20px;font-size:14px;color:#a6a6a6;left:952.5px;">Italic</div>
<svg style="left:1034.5px;top:111px;" width="21.5" height="11.5" viewBox="0 0 21.5 11.5"><rect x="0.700" y="1.400" width="20.1" height="8.7" rx="3.2" fill="#2e2e2e" stroke="#1a1a1a" stroke-width="1"/><rect x="0.8" y="0.800" width="8.72" height="9.9" rx="3.6" fill="#cfcfcf" stroke="#1a1a1a" stroke-width="1.500"/></svg>
<div class="t" style="top:107px;height:20px;line-height:20px;font-size:14px;color:#a6a6a6;left:1059.5px;">Upper Case</div>
<svg style="left:1034.5px;top:127.5px;" width="21.5" height="11.5" viewBox="0 0 21.5 11.5"><rect x="0.700" y="1.400" width="20.1" height="8.7" rx="3.2" fill="#2e2e2e" stroke="#1a1a1a" stroke-width="1"/><rect x="0.8" y="0.800" width="8.72" height="9.9" rx="3.6" fill="#cfcfcf" stroke="#1a1a1a" stroke-width="1.500"/></svg>
<div class="t" style="top:123.3px;height:20px;line-height:20px;font-size:14px;color:#a6a6a6;left:1059.5px;">Distort</div>
<svg style="left:1143px;top:110px;" width="21.5" height="12.5" viewBox="0 0 21.5 12.5"><rect x="0.700" y="1.400" width="20.1" height="9.7" rx="3.2" fill="#707070" stroke="#4a4a4a" stroke-width="1"/><rect x="11.98" y="0.800" width="8.72" height="10.9" rx="3.6" fill="#e4e4e4" stroke="#1a1a1a" stroke-width="1.500"/></svg>
<div class="t" style="top:107px;height:20px;line-height:20px;font-size:14px;color:#a6a6a6;left:1167.5px;">Welded</div>
<svg style="left:1739.3px;top:74.3px;" width="4" height="60.2" viewBox="0 0 4 60.2"><circle cx="2" cy="1.5" r="1.25" fill="#969696"/><circle cx="2" cy="9.65" r="1.25" fill="#969696"/><circle cx="2" cy="17.8" r="1.25" fill="#969696"/><circle cx="2" cy="25.95" r="1.25" fill="#969696"/><circle cx="2" cy="34.1" r="1.25" fill="#969696"/><circle cx="2" cy="42.25" r="1.25" fill="#969696"/><circle cx="2" cy="50.4" r="1.25" fill="#969696"/><circle cx="2" cy="58.55" r="1.25" fill="#969696"/></svg>
<svg style="left:1818px;top:74.3px;" width="4" height="60.2" viewBox="0 0 4 60.2"><circle cx="2" cy="1.5" r="1.25" fill="#969696"/><circle cx="2" cy="9.65" r="1.25" fill="#969696"/><circle cx="2" cy="17.8" r="1.25" fill="#969696"/><circle cx="2" cy="25.95" r="1.25" fill="#969696"/><circle cx="2" cy="34.1" r="1.25" fill="#969696"/><circle cx="2" cy="42.25" r="1.25" fill="#969696"/><circle cx="2" cy="50.4" r="1.25" fill="#969696"/><circle cx="2" cy="58.55" r="1.25" fill="#969696"/></svg>
<svg style="left:1748px;top:94px;" width="24" height="24" viewBox="0 0 24 24"><path d="M3.500 10a9 9 0 0 1 16.500-3" fill="none" stroke="#0a0a0a" stroke-width="2.600"/><path d="M22.500 2.500v7h-7z" fill="#0a0a0a"/><path d="M20.500 14a9 9 0 0 1-16.500 3" fill="none" stroke="#0a0a0a" stroke-width="2.600"/><path d="M1.500 21.500v-7h7z" fill="#0a0a0a"/><circle cx="12" cy="12" r="3.200" fill="#0a0a0a"/></svg>
<svg style="left:1780px;top:93px;" width="26" height="26" viewBox="0 0 26 26"><rect x="7" y="1.500" width="10" height="7" fill="#0a0a0a"/><path d="M1.500 9h19v10h-3v-4h-13v4h-3z" fill="#0a0a0a"/><rect x="6.500" y="15" width="11" height="9.500" fill="#fff" stroke="#0a0a0a" stroke-width="1.400"/><path d="M8.500 18h7M8.500 20.300h7M8.500 22.500h5" stroke="#0a0a0a" stroke-width="1.100"/><path d="M24 4l-4 13M18.500 9l4 8" stroke="#0a0a0a" stroke-width="1.800"/><circle cx="23.300" cy="19.500" r="2" fill="none" stroke="#0a0a0a" stroke-width="1.500"/></svg>
<svg style="left:1826px;top:94px;" width="24" height="24" viewBox="0 0 24 24"><rect x="1.500" y="2" width="4" height="20" rx="1" fill="none" stroke="#222" stroke-width="1.300"/><rect x="11" y="8" width="8" height="8" fill="none" stroke="#444" stroke-width="1.200"/><path d="M6 12h5M19.500 10h3M19.500 12h3M19.500 14h3" stroke="#555" stroke-width="1"/></svg>
<svg style="left:1860px;top:94px;" width="24" height="24" viewBox="0 0 24 24"><rect x="18.500" y="2" width="4" height="20" rx="1" fill="none" stroke="#222" stroke-width="1.300"/><rect x="5" y="8" width="8" height="8" fill="none" stroke="#444" stroke-width="1.200"/><path d="M13 12h5M1.500 10h3M1.500 12h3M1.500 14h3" stroke="#555" stroke-width="1"/></svg>
<svg style="left:1895px;top:71px;" width="20" height="17" viewBox="0 0 20 17"><path d="M2.500 2.500l6 6-6 6M10.500 2.500l6 6-6 6" fill="none" stroke="#444" stroke-width="2.300" stroke-linecap="round" stroke-linejoin="round"/></svg>
<div style="left:0px;top:150px;width:90.5px;height:935px;background:linear-gradient(90deg,#f4f4f4 0,#eaeaea 5%,#e3e3e3 45%,#c9c9c9 100%);"></div>
<div style="left:90.5px;top:150px;width:4.3px;height:935px;background:linear-gradient(90deg,#bdbdbd,#adadad);"></div>
<svg style="left:9.4px;top:160.4px;" width="68.3" height="4" viewBox="0 0 68.3 4"><circle cy="2" cx="1.5" r="1.25" fill="#9c9c9c"/><circle cy="2" cx="9.65" r="1.25" fill="#9c9c9c"/><circle cy="2" cx="17.8" r="1.25" fill="#9c9c9c"/><circle cy="2" cx="25.95" r="1.25" fill="#9c9c9c"/><circle cy="2" cx="34.1" r="1.25" fill="#9c9c9c"/><circle cy="2" cx="42.25" r="1.25" fill="#9c9c9c"/><circle cy="2" cx="50.4" r="1.25" fill="#9c9c9c"/><circle cy="2" cx="58.55" r="1.25" fill="#9c9c9c"/><circle cy="2" cx="66.7" r="1.25" fill="#9c9c9c"/></svg>
<div style="left:33.8px;top:167.5px;width:27.2px;height:23.5px;background:#cacaca;"></div>
<svg style="left:33.5px;top:165px;" width="26" height="27" viewBox="0 0 26 27"><path d="M6 3L6 21l4.500-4.200 3.300 7.300 3.400-1.600-3.300-7.100 6.300-0.500z" fill="#dedede" stroke="#0a0a0a" stroke-width="2.300" stroke-linejoin="round"/></svg>
<svg style="left:33.5px;top:194.5px;" width="27" height="28" viewBox="0 0 24 25"><g transform="rotate(32 12 12)"><path d="M9 -0.500h6v4h-6z" fill="#0a0a0a"/><path d="M9 4.500h6v12l-3 6-3-6z" fill="#0a0a0a"/><path d="M10.800 19l1.200 2.800 1.200-2.800z" fill="#fff"/><path d="M9.500 16.300h5" stroke="#eee" stroke-width="0.800"/></g></svg>
<svg style="left:34px;top:226px;" width="26" height="24" viewBox="0 0 26 24"><rect x="2.300" y="1.800" width="21.400" height="20.400" fill="none" stroke="#0a0a0a" stroke-width="3"/></svg>
<svg style="left:34px;top:256px;" width="26" height="24" viewBox="0 0 26 24"><circle cx="13" cy="12" r="10.200" fill="none" stroke="#0a0a0a" stroke-width="3"/></svg>
<svg style="left:34px;top:286px;" width="26" height="24" viewBox="0 0 26 24"><path d="M2 12L7.500 2.500h11L24 12l-5.500 9.500h-11z" fill="none" stroke="#0a0a0a" stroke-width="3" stroke-linejoin="round"/></svg>
<svg style="left:34px;top:316px;" width="26" height="25" viewBox="0 0 26 25"><path d="M3 23V7.500L11 2l8.500 4 4 9-7 8z" fill="none" stroke="#0a0a0a" stroke-width="2.700" stroke-linejoin="round"/></svg>
<svg style="left:34px;top:346.3px;" width="26" height="23" viewBox="0 0 26 23"><path d="M2.500 1.500h21" stroke="#0a0a0a" stroke-width="1.900"/><path d="M3 4.500v16h7M23 4.500v16h-7" fill="none" stroke="#0a0a0a" stroke-width="2"/></svg>
<div class="t" style="top:375px;height:26px;line-height:26px;font-size:23.5px;color:#000;font-weight:bold;left:-252.7px;width:600px;text-align:center;-webkit-text-stroke:0.900px #000;">A</div>
<svg style="left:37px;top:405px;" width="20" height="26" viewBox="0 0 20 26"><path d="M10 1a8.300 8.300 0 0 1 8.300 8.300c0 5.500-8.300 15-8.300 15S1.700 14.800 1.700 9.300A8.300 8.300 0 0 1 10 1z" fill="#0a0a0a"/><circle cx="10" cy="9" r="3" fill="#e8e8e8"/></svg>
<svg style="left:34px;top:434px;" width="26" height="26" viewBox="0 0 26 26"><g transform="rotate(-35 13 13)"><rect x="0.500" y="9.500" width="25" height="7" fill="#eee" stroke="#0a0a0a" stroke-width="1.700"/><path d="M4 10v3M7.500 10v3M11 10v3M14.500 10v3M18 10v3M21.500 10v3" stroke="#0a0a0a" stroke-width="1.200"/></g></svg>
<svg style="left:9.4px;top:470.5px;" width="68.3" height="4" viewBox="0 0 68.3 4"><circle cy="2" cx="1.5" r="1.25" fill="#9c9c9c"/><circle cy="2" cx="9.65" r="1.25" fill="#9c9c9c"/><circle cy="2" cx="17.8" r="1.25" fill="#9c9c9c"/><circle cy="2" cx="25.95" r="1.25" fill="#9c9c9c"/><circle cy="2" cx="34.1" r="1.25" fill="#9c9c9c"/><circle cy="2" cx="42.25" r="1.25" fill="#9c9c9c"/><circle cy="2" cx="50.4" r="1.25" fill="#9c9c9c"/><circle cy="2" cx="58.55" r="1.25" fill="#9c9c9c"/><circle cy="2" cx="66.7" r="1.25" fill="#9c9c9c"/></svg>
<svg style="left:35px;top:475px;" width="24" height="28" viewBox="0 0 24 28"><ellipse cx="12" cy="14" rx="10" ry="12" fill="none" stroke="#0a0a0a" stroke-width="1.400"/><ellipse cx="12" cy="14" rx="7.500" ry="9.500" fill="none" stroke="#0a0a0a" stroke-width="2.800"/><ellipse cx="12" cy="14" rx="4.300" ry="6.300" fill="none" stroke="#0a0a0a" stroke-width="1.300"/></svg>
<svg style="left:2.3px;top:507.5px;" width="90.2" height="4" viewBox="0 0 90.2 4"><circle cy="2" cx="1.5" r="0.95" fill="#9a9a9a"/><circle cy="2" cx="5.55" r="0.95" fill="#9a9a9a"/><circle cy="2" cx="9.6" r="0.95" fill="#9a9a9a"/><circle cy="2" cx="13.65" r="0.95" fill="#9a9a9a"/><circle cy="2" cx="17.7" r="0.95" fill="#9a9a9a"/><circle cy="2" cx="21.75" r="0.95" fill="#9a9a9a"/><circle cy="2" cx="25.8" r="0.95" fill="#9a9a9a"/><circle cy="2" cx="29.85" r="0.95" fill="#9a9a9a"/><circle cy="2" cx="33.9" r="0.95" fill="#9a9a9a"/><circle cy="2" cx="37.95" r="0.95" fill="#9a9a9a"/><circle cy="2" cx="42" r="0.95" fill="#9a9a9a"/><circle cy="2" cx="46.05" r="0.95" fill="#9a9a9a"/><circle cy="2" cx="50.1" r="0.95" fill="#9a9a9a"/><circle cy="2" cx="54.15" r="0.95" fill="#9a9a9a"/><circle cy="2" cx="58.2" r="0.95" fill="#9a9a9a"/><circle cy="2" cx="62.25" r="0.95" fill="#9a9a9a"/><circle cy="2" cx="66.3" r="0.95" fill="#9a9a9a"/><circle cy="2" cx="70.35" r="0.95" fill="#9a9a9a"/><circle cy="2" cx="74.4" r="0.95" fill="#9a9a9a"/><circle cy="2" cx="78.45" r="0.95" fill="#9a9a9a"/><circle cy="2" cx="82.5" r="0.95" fill="#9a9a9a"/><circle cy="2" cx="86.55" r="0.95" fill="#9a9a9a"/></svg>
<svg style="left:34px;top:519px;" width="26" height="26" viewBox="0 0 26 26"><path d="M11.600 5V16.400H22.400M8 20.600V9H19.500M16 1.400V20M11.600 12.500H25M2.600 9H8M16 20.600V24.800M8 16.400H11.600" fill="none" stroke="#a4a4a4" stroke-width="0.900"/><path d="M2.600 5H11.600V1.400H25.400V16.400H22.400V24.800H8V20.600H2.600Z" fill="none" stroke="#6a6a6a" stroke-width="1.700"/></svg>
<svg style="left:34px;top:549px;" width="26" height="26" viewBox="0 0 26 26"><path d="M2 2h14v6h7v15H9v-6H2z" fill="none" stroke="#585858" stroke-width="1.900"/><rect x="9" y="8" width="7" height="9" fill="none" stroke="#aaa" stroke-width="1"/></svg>
<svg style="left:34px;top:579px;" width="26" height="26" viewBox="0 0 26 26"><path d="M2.500 2.500h16v6H9.500v9h-7z" fill="none" stroke="#555" stroke-width="2"/><rect x="10" y="9" width="14" height="14" fill="#d8d8d8" fill-opacity="0.500" stroke="#aaa" stroke-width="1"/></svg>
<svg style="left:34px;top:609px;" width="26" height="26" viewBox="0 0 26 26"><rect x="2" y="2" width="15" height="15" fill="none" stroke="#b0b0b0" stroke-width="1.200"/><rect x="10" y="10" width="14" height="14" fill="none" stroke="#b0b0b0" stroke-width="1.200"/><rect x="9" y="8.500" width="9.500" height="9.500" fill="none" stroke="#555" stroke-width="2"/></svg>
<svg style="left:2.3px;top:640px;" width="90.2" height="4" viewBox="0 0 90.2 4"><circle cy="2" cx="1.5" r="0.95" fill="#9a9a9a"/><circle cy="2" cx="5.55" r="0.95" fill="#9a9a9a"/><circle cy="2" cx="9.6" r="0.95" fill="#9a9a9a"/><circle cy="2" cx="13.65" r="0.95" fill="#9a9a9a"/><circle cy="2" cx="17.7" r="0.95" fill="#9a9a9a"/><circle cy="2" cx="21.75" r="0.95" fill="#9a9a9a"/><circle cy="2" cx="25.8" r="0.95" fill="#9a9a9a"/><circle cy="2" cx="29.85" r="0.95" fill="#9a9a9a"/><circle cy="2" cx="33.9" r="0.95" fill="#9a9a9a"/><circle cy="2" cx="37.95" r="0.95" fill="#9a9a9a"/><circle cy="2" cx="42" r="0.95" fill="#9a9a9a"/><circle cy="2" cx="46.05" r="0.95" fill="#9a9a9a"/><circle cy="2" cx="50.1" r="0.95" fill="#9a9a9a"/><circle cy="2" cx="54.15" r="0.95" fill="#9a9a9a"/><circle cy="2" cx="58.2" r="0.95" fill="#9a9a9a"/><circle cy="2" cx="62.25" r="0.95" fill="#9a9a9a"/><circle cy="2" cx="66.3" r="0.95" fill="#9a9a9a"/><circle cy="2" cx="70.35" r="0.95" fill="#9a9a9a"/><circle cy="2" cx="74.4" r="0.95" fill="#9a9a9a"/><circle cy="2" cx="78.45" r="0.95" fill="#9a9a9a"/><circle cy="2" cx="82.5" r="0.95" fill="#9a9a9a"/><circle cy="2" cx="86.55" r="0.95" fill="#9a9a9a"/></svg>
<svg style="left:34px;top:652px;" width="26" height="26" viewBox="0 0 26 26"><rect x="1.0" y="1.0" width="6.300" height="6.300" fill="#0a0a0a"/><rect x="9.8" y="1.0" width="6.300" height="6.300" fill="#0a0a0a"/><rect x="18.6" y="1.0" width="6.300" height="6.300" fill="#0a0a0a"/><rect x="1.0" y="9.8" width="6.300" height="6.300" fill="#0a0a0a"/><rect x="9.8" y="9.8" width="6.300" height="6.300" fill="#0a0a0a"/><rect x="18.6" y="9.8" width="6.300" height="6.300" fill="#0a0a0a"/><rect x="1.0" y="18.6" width="6.300" height="6.300" fill="#0a0a0a"/><rect x="9.8" y="18.6" width="6.300" height="6.300" fill="#0a0a0a"/><rect x="18.6" y="18.6" width="6.300" height="6.300" fill="#0a0a0a"/></svg>
<svg style="left:34px;top:682px;" width="26" height="26" viewBox="0 0 26 26"><circle cx="13" cy="13" r="7.300" fill="none" stroke="#0a0a0a" stroke-width="1.700"/><rect x="10.90" y="1.10" width="4.200" height="4.200" fill="#0a0a0a" stroke="#0a0a0a" stroke-width="1.100" transform="rotate(0 13.00 3.20)"/><rect x="17.83" y="3.97" width="4.200" height="4.200" fill="#fff" stroke="#0a0a0a" stroke-width="1.100" transform="rotate(45 19.93 6.07)"/><rect x="20.70" y="10.90" width="4.200" height="4.200" fill="#fff" stroke="#0a0a0a" stroke-width="1.100" transform="rotate(90 22.80 13.00)"/><rect x="17.83" y="17.83" width="4.200" height="4.200" fill="#fff" stroke="#0a0a0a" stroke-width="1.100" transform="rotate(135 19.93 19.93)"/><rect x="10.90" y="20.70" width="4.200" height="4.200" fill="#fff" stroke="#0a0a0a" stroke-width="1.100" transform="rotate(180 13.00 22.80)"/><rect x="3.97" y="17.83" width="4.200" height="4.200" fill="#fff" stroke="#0a0a0a" stroke-width="1.100" transform="rotate(225 6.07 19.93)"/><rect x="1.10" y="10.90" width="4.200" height="4.200" fill="#fff" stroke="#0a0a0a" stroke-width="1.100" transform="rotate(270 3.20 13.00)"/><rect x="3.97" y="3.97" width="4.200" height="4.200" fill="#fff" stroke="#0a0a0a" stroke-width="1.100" transform="rotate(315 6.07 6.07)"/></svg>
<svg style="left:2.3px;top:713px;" width="90.2" height="4" viewBox="0 0 90.2 4"><circle cy="2" cx="1.5" r="0.95" fill="#9a9a9a"/><circle cy="2" cx="5.55" r="0.95" fill="#9a9a9a"/><circle cy="2" cx="9.6" r="0.95" fill="#9a9a9a"/><circle cy="2" cx="13.65" r="0.95" fill="#9a9a9a"/><circle cy="2" cx="17.7" r="0.95" fill="#9a9a9a"/><circle cy="2" cx="21.75" r="0.95" fill="#9a9a9a"/><circle cy="2" cx="25.8" r="0.95" fill="#9a9a9a"/><circle cy="2" cx="29.85" r="0.95" fill="#9a9a9a"/><circle cy="2" cx="33.9" r="0.95" fill="#9a9a9a"/><circle cy="2" cx="37.95" r="0.95" fill="#9a9a9a"/><circle cy="2" cx="42" r="0.95" fill="#9a9a9a"/><circle cy="2" cx="46.05" r="0.95" fill="#9a9a9a"/><circle cy="2" cx="50.1" r="0.95" fill="#9a9a9a"/><circle cy="2" cx="54.15" r="0.95" fill="#9a9a9a"/><circle cy="2" cx="58.2" r="0.95" fill="#9a9a9a"/><circle cy="2" cx="62.25" r="0.95" fill="#9a9a9a"/><circle cy="2" cx="66.3" r="0.95" fill="#9a9a9a"/><circle cy="2" cx="70.35" r="0.95" fill="#9a9a9a"/><circle cy="2" cx="74.4" r="0.95" fill="#9a9a9a"/><circle cy="2" cx="78.45" r="0.95" fill="#9a9a9a"/><circle cy="2" cx="82.5" r="0.95" fill="#9a9a9a"/><circle cy="2" cx="86.55" r="0.95" fill="#9a9a9a"/></svg>
<svg style="left:34px;top:724px;" width="26" height="28" viewBox="0 0 26 28"><path d="M3.500 25V10.500L11 5l10.500 4 3 9-8 7z" fill="none" stroke="#777" stroke-width="2" stroke-linejoin="round"/><path d="M8 5.500q4-3 8-0.500" fill="none" stroke="#0a0a0a" stroke-width="1.600"/><path d="M18 5.500l-4.500-3.500 0.500 5z" fill="#0a0a0a"/></svg>
<svg style="left:34px;top:755px;" width="26" height="27" viewBox="0 0 26 27"><path d="M2.500 24.500V16q0-13 13-13h8" fill="none" stroke="#0a0a0a" stroke-width="2.600"/><path d="M23.500 3v21.500H2.500" fill="none" stroke="#0a0a0a" stroke-width="1.300" stroke-dasharray="2.500 1.800"/></svg>
<div class="t" style="top:784px;height:20px;line-height:20px;font-size:14.5px;color:#9a9a9a;left:-252.5px;width:600px;text-align:center;">Radius:</div>
<div style="left:3.5px;top:809px;width:69px;height:20.5px;background:#fff;border:1px solid #d2d2d2;box-sizing:border-box;"></div>
<div class="t" style="top:809.75px;height:20px;line-height:20px;font-size:14px;color:#b8b8b8;left:7.5px;"></div>
<div class="t" style="top:809.8px;height:20px;line-height:20px;font-size:14px;color:#b4b4b4;left:-263.5px;width:600px;text-align:center;">10.0</div>
<div style="left:77px;top:806.5px;width:13px;height:25px;background:#f6f6f6;border-radius:5px;box-shadow:0 0 0 0.5px rgba(0,0,0,0.10), 0 1px 1px rgba(0,0,0,0.12);"></div>
<svg style="left:77px;top:806.5px;" width="13" height="25" viewBox="0 0 13 25"><path d="M2.9 9 l3.6 -3.6 l3.6 3.6" fill="none" stroke="#666" stroke-width="1.6" stroke-linecap="round" stroke-linejoin="round"/><path d="M2.9 16 l3.6 3.6 l3.6 -3.6" fill="none" stroke="#666" stroke-width="1.6" stroke-linecap="round" stroke-linejoin="round"/></svg>
<svg style="left:94.7px;top:150px;" width="1162.3" height="935" viewBox="0 0 1162.3 935"><rect x="0" y="0" width="1162.3" height="935.0" fill="#f9f9f9"/><path d="M13.68 0V935M37.29 0V935M60.89 0V935M84.50 0V935M108.10 0V935M131.71 0V935M155.31 0V935M178.92 0V935M202.53 0V935M226.13 0V935M249.74 0V935M273.34 0V935M296.94 0V935M320.55 0V935M344.16 0V935M367.76 0V935M391.37 0V935M414.97 0V935M438.57 0V935M462.18 0V935M485.79 0V935M509.39 0V935M532.99 0V935M556.60 0V935M580.20 0V935M603.81 0V935M627.41 0V935M651.02 0V935M674.62 0V935M698.23 0V935M721.84 0V935M745.44 0V935M769.04 0V935M792.65 0V935M816.25 0V935M839.86 0V935M863.46 0V935M887.07 0V935M910.67 0V935M934.28 0V935M957.88 0V935M981.49 0V935M1005.10 0V935M1028.70 0V935M1052.31 0V935M1075.91 0V935M1099.51 0V935M1123.12 0V935M1146.72 0V935M0 19.59H1162M0 43.20H1162M0 66.80H1162M0 90.41H1162M0 114.01H1162M0 137.62H1162M0 161.23H1162M0 184.83H1162M0 208.44H1162M0 232.04H1162M0 255.64H1162M0 279.25H1162M0 302.86H1162M0 326.46H1162M0 350.06H1162M0 373.67H1162M0 397.27H1162M0 420.88H1162M0 444.49H1162M0 468.09H1162M0 491.69H1162M0 515.30H1162M0 538.90H1162M0 562.51H1162M0 586.12H1162M0 609.72H1162M0 633.33H1162M0 656.93H1162M0 680.54H1162M0 704.14H1162M0 727.74H1162M0 751.35H1162M0 774.95H1162M0 798.56H1162M0 822.16H1162M0 845.77H1162M0 869.38H1162M0 892.98H1162M0 916.59H1162" stroke="#c3c3c3" stroke-width="1.050" fill="none"/><rect x="0" y="0" width="3.300" height="935.0" fill="#fbfbfb"/><rect x="0" y="0" width="1162.3" height="2.500" fill="#fbfbfb"/><rect x="1159.3" y="0" width="3" height="935.0" fill="#fbfbfb"/><g font-family="Liberation Sans, sans-serif" font-size="14.200" fill="#8c8c8c" stroke="#8c8c8c" stroke-width="0.300"><text x="83.5" y="23.300" text-anchor="middle">520</text><text x="83.5" y="923.5" text-anchor="middle">520</text><text x="177.9" y="23.300" text-anchor="middle">480</text><text x="177.9" y="923.5" text-anchor="middle">480</text><text x="272.3" y="23.300" text-anchor="middle">440</text><text x="272.3" y="923.5" text-anchor="middle">440</text><text x="366.8" y="23.300" text-anchor="middle">400</text><text x="366.8" y="923.5" text-anchor="middle">400</text><text x="461.2" y="23.300" text-anchor="middle">360</text><text x="461.2" y="923.5" text-anchor="middle">360</text><text x="555.6" y="23.300" text-anchor="middle">320</text><text x="555.6" y="923.5" text-anchor="middle">320</text><text x="650.0" y="23.300" text-anchor="middle">280</text><text x="650.0" y="923.5" text-anchor="middle">280</text><text x="744.4" y="23.300" text-anchor="middle">240</text><text x="744.4" y="923.5" text-anchor="middle">240</text><text x="838.9" y="23.300" text-anchor="middle">200</text><text x="838.9" y="923.5" text-anchor="middle">200</text><text x="933.3" y="23.300" text-anchor="middle">160</text><text x="933.3" y="923.5" text-anchor="middle">160</text><text x="1027.7" y="23.300" text-anchor="middle">120</text><text x="1027.7" y="923.5" text-anchor="middle">120</text><text x="1122.1" y="23.300" text-anchor="middle">80</text><text x="1122.1" y="923.5" text-anchor="middle">80</text><text x="10" y="48.4">80</text><text x="1152.7" y="48.4" text-anchor="end">80</text><text x="10" y="142.8">120</text><text x="1152.7" y="142.8" text-anchor="end">120</text><text x="10" y="237.2">160</text><text x="1152.7" y="237.2" text-anchor="end">160</text><text x="10" y="331.7">200</text><text x="1152.7" y="331.7" text-anchor="end">200</text><text x="10" y="426.1">240</text><text x="1152.7" y="426.1" text-anchor="end">240</text><text x="10" y="520.5">280</text><text x="1152.7" y="520.5" text-anchor="end">280</text><text x="10" y="614.9">320</text><text x="1152.7" y="614.9" text-anchor="end">320</text><text x="10" y="709.3">360</text><text x="1152.7" y="709.3" text-anchor="end">360</text><text x="10" y="803.8">400</text><text x="1152.7" y="803.8" text-anchor="end">400</text><text x="10" y="898.2">440</text><text x="1152.7" y="898.2" text-anchor="end">440</text></g><path d="M460.82 114.64A306.30 306.30 0 0 1 508.78 114.64A24.10 24.10 0 0 1 460.82 114.64ZM507.72 114.56A306.30 306.30 0 0 1 555.11 121.88A24.10 24.10 0 0 1 507.72 114.56ZM554.07 121.64A306.30 306.30 0 0 1 599.79 136.10A24.10 24.10 0 0 1 554.07 121.64ZM598.81 135.71A306.30 306.30 0 0 1 641.78 156.99A24.10 24.10 0 0 1 598.81 135.71ZM640.87 156.44A306.30 306.30 0 0 1 680.09 184.03A24.10 24.10 0 0 1 640.87 156.44ZM679.27 183.36A306.30 306.30 0 0 1 713.82 216.61A24.10 24.10 0 0 1 679.27 183.36ZM713.12 215.81A306.30 306.30 0 0 1 742.19 253.95A24.10 24.10 0 0 1 713.12 215.81ZM741.61 253.06A306.30 306.30 0 0 1 764.52 295.19A24.10 24.10 0 0 1 741.61 253.06ZM764.08 294.22A306.30 306.30 0 0 1 780.29 339.35A24.10 24.10 0 0 1 764.08 294.22ZM780.01 338.32A306.30 306.30 0 0 1 789.14 385.40A24.10 24.10 0 0 1 780.01 338.32ZM789.02 384.35A306.30 306.30 0 0 1 790.85 432.26A24.10 24.10 0 0 1 789.02 384.35ZM790.90 431.20A306.30 306.30 0 0 1 785.40 478.84A24.10 24.10 0 0 1 790.90 431.20ZM785.60 477.80A306.30 306.30 0 0 1 772.89 524.03A24.10 24.10 0 0 1 785.60 477.80ZM773.25 523.03A306.30 306.30 0 0 1 753.63 566.79A24.10 24.10 0 0 1 773.25 523.03ZM754.14 565.86A306.30 306.30 0 0 1 728.08 606.11A24.10 24.10 0 0 1 754.14 565.86ZM728.72 605.26A306.30 306.30 0 0 1 696.82 641.06A24.10 24.10 0 0 1 728.72 605.26ZM697.58 640.33A306.30 306.30 0 0 1 660.59 670.84A24.10 24.10 0 0 1 697.58 640.33ZM661.45 670.23A306.30 306.30 0 0 1 620.24 694.73A24.10 24.10 0 0 1 661.45 670.23ZM621.19 694.26A306.30 306.30 0 0 1 576.71 712.19A24.10 24.10 0 0 1 621.19 694.26ZM577.72 711.86A306.30 306.30 0 0 1 531.03 722.79A24.10 24.10 0 0 1 577.72 711.86ZM532.08 722.63A306.30 306.30 0 0 1 484.27 726.30A24.10 24.10 0 0 1 532.08 722.63ZM485.33 726.30A306.30 306.30 0 0 1 437.52 722.63A24.10 24.10 0 0 1 485.33 726.30ZM438.57 722.79A306.30 306.30 0 0 1 391.88 711.86A24.10 24.10 0 0 1 438.57 722.79ZM392.89 712.19A306.30 306.30 0 0 1 348.41 694.26A24.10 24.10 0 0 1 392.89 712.19ZM349.36 694.73A306.30 306.30 0 0 1 308.15 670.23A24.10 24.10 0 0 1 349.36 694.73ZM309.01 670.84A306.30 306.30 0 0 1 272.02 640.33A24.10 24.10 0 0 1 309.01 670.84ZM272.78 641.06A306.30 306.30 0 0 1 240.88 605.26A24.10 24.10 0 0 1 272.78 641.06ZM241.52 606.11A306.30 306.30 0 0 1 215.46 565.86A24.10 24.10 0 0 1 241.52 606.11ZM215.97 566.79A306.30 306.30 0 0 1 196.35 523.03A24.10 24.10 0 0 1 215.97 566.79ZM196.71 524.03A306.30 306.30 0 0 1 184.00 477.80A24.10 24.10 0 0 1 196.71 524.03ZM184.20 478.84A306.30 306.30 0 0 1 178.70 431.20A24.10 24.10 0 0 1 184.20 478.84ZM178.75 432.26A306.30 306.30 0 0 1 180.58 384.35A24.10 24.10 0 0 1 178.75 432.26ZM180.46 385.40A306.30 306.30 0 0 1 189.59 338.32A24.10 24.10 0 0 1 180.46 385.40ZM189.31 339.35A306.30 306.30 0 0 1 205.52 294.22A24.10 24.10 0 0 1 189.31 339.35ZM205.08 295.19A306.30 306.30 0 0 1 227.99 253.06A24.10 24.10 0 0 1 205.08 295.19ZM227.41 253.95A306.30 306.30 0 0 1 256.48 215.81A24.10 24.10 0 0 1 227.41 253.95ZM255.78 216.61A306.30 306.30 0 0 1 290.33 183.36A24.10 24.10 0 0 1 255.78 216.61ZM289.51 184.03A306.30 306.30 0 0 1 328.73 156.44A24.10 24.10 0 0 1 289.51 184.03ZM327.82 156.99A306.30 306.30 0 0 1 370.79 135.71A24.10 24.10 0 0 1 327.82 156.99ZM369.81 136.10A306.30 306.30 0 0 1 415.53 121.64A24.10 24.10 0 0 1 369.81 136.10ZM414.49 121.88A306.30 306.30 0 0 1 461.88 114.56A24.10 24.10 0 0 1 414.49 121.88Z" fill="none" stroke="#2a2ae2" stroke-width="1.800" stroke-dasharray="7.500 3.200 2.400 3.200 2.400 3.200"/><rect x="159.8" y="94.5" width="11" height="11" fill="#8b8b97"/><rect x="479.3" y="94.5" width="11" height="11" fill="#8b8b97"/><rect x="798.8" y="94.5" width="11" height="11" fill="#8b8b97"/><rect x="159.8" y="414.5" width="11" height="11" fill="#8b8b97"/><rect x="798.8" y="414.5" width="11" height="11" fill="#8b8b97"/><rect x="159.8" y="734.5" width="11" height="11" fill="#8b8b97"/><rect x="479.3" y="734.5" width="11" height="11" fill="#8b8b97"/><rect x="798.8" y="734.5" width="11" height="11" fill="#8b8b97"/><rect x="161.1" y="575.8" width="8.5" height="8.5" fill="#8b8b97"/><rect x="321.1" y="735.8" width="8.5" height="8.5" fill="#8b8b97"/><rect x="479.3" y="414.5" width="11" height="11" fill="#8b8b97"/><circle cx="484.8" cy="420.0" r="9.300" fill="none" stroke="#2a2ae2" stroke-width="1.500"/><g transform="translate(165.3 100.0) rotate(0)"><path d="M-13.2 4.500A14 14 0 0 1 -2 -13.900" fill="none" stroke="#707070" stroke-width="3.200"/><path d="M-3 -19.200l11 5.200-11 5z" fill="#707070"/><path d="M-18.200 3l5.700 9 4.800-9.300z" fill="#707070"/></g><g transform="translate(804.3 100.0) rotate(90)"><path d="M-13.2 4.500A14 14 0 0 1 -2 -13.900" fill="none" stroke="#707070" stroke-width="3.200"/><path d="M-3 -19.200l11 5.200-11 5z" fill="#707070"/><path d="M-18.200 3l5.700 9 4.800-9.300z" fill="#707070"/></g><g transform="translate(804.3 740.0) rotate(180)"><path d="M-13.2 4.500A14 14 0 0 1 -2 -13.900" fill="none" stroke="#707070" stroke-width="3.200"/><path d="M-3 -19.200l11 5.200-11 5z" fill="#707070"/><path d="M-18.200 3l5.700 9 4.800-9.300z" fill="#707070"/></g><g transform="translate(165.3 740.0) rotate(270)"><path d="M-13.2 4.500A14 14 0 0 1 -2 -13.900" fill="none" stroke="#707070" stroke-width="3.200"/><path d="M-3 -19.200l11 5.200-11 5z" fill="#707070"/><path d="M-18.200 3l5.700 9 4.800-9.300z" fill="#707070"/></g></svg>
<div style="left:1257px;top:150px;width:2px;height:935px;background:#9a9a9a;"></div>
<div style="left:1259px;top:150px;width:661px;height:935px;background:#ececec;"></div>
<div style="left:1259px;top:150.5px;width:661px;height:29.5px;background:linear-gradient(90deg,#000 0%,#2a0808 9%,#6a1616 26%,#8f2020 40%,#c23030 57%,#cf4a2c 72%,#d9662a 88%,#e27a2a 100%);"></div>
<div style="left:1262.5px;top:156px;width:17px;height:17px;border-radius:50%;background:#3c3c3c;"></div>
<svg style="left:1262.5px;top:156px;" width="17" height="17" viewBox="0 0 17 17"><path d="M5 5l7 7M12 5l-7 7" stroke="#fff" stroke-width="2.400" stroke-linecap="round"/></svg>
<div style="left:1287px;top:156px;width:17px;height:17px;border-radius:50%;background:#3c3c3c;"></div>
<svg style="left:1287px;top:156px;" width="17" height="17" viewBox="0 0 17 17"><rect x="6.500" y="4.500" width="6.500" height="5.500" rx="1" fill="none" stroke="#ddd" stroke-width="1.500"/><rect x="4" y="7" width="6.500" height="5.500" rx="1" fill="#3c3c3c" stroke="#fff" stroke-width="1.500"/></svg>
<div class="t" style="top:153.3px;height:24px;line-height:24px;font-size:16px;color:#fff;left:1310.5px;">Cuts / Layers</div>
<div style="left:1261.8px;top:181px;width:570.5px;height:283.3px;background:#fff;box-shadow:0 0 0 1.500px #d2d2d2;"></div>
<div style="left:1261.8px;top:181px;width:570.5px;height:23px;background:#efefef;"></div>
<div style="left:1303px;top:185px;width:1.3px;height:16px;background:#c6c6c6;"></div>
<div style="left:1357.5px;top:185px;width:1.3px;height:16px;background:#c6c6c6;"></div>
<div style="left:1476.8px;top:185px;width:1.3px;height:16px;background:#c6c6c6;"></div>
<div style="left:1565.8px;top:185px;width:1.3px;height:16px;background:#c6c6c6;"></div>
<div style="left:1625.5px;top:185px;width:1.3px;height:16px;background:#c6c6c6;"></div>
<div style="left:1675.8px;top:185px;width:1.3px;height:16px;background:#c6c6c6;"></div>
<div style="left:1830.5px;top:185px;width:1.3px;height:16px;background:#c6c6c6;"></div>
<div class="t" style="top:182.2px;height:20px;line-height:20px;font-size:14px;color:#1a1a1a;left:1272px;">#</div>
<div class="t" style="top:182.2px;height:20px;line-height:20px;font-size:14px;color:#1a1a1a;left:1309.5px;">Layer</div>
<div class="t" style="top:182.2px;height:20px;line-height:20px;font-size:14px;color:#1a1a1a;left:1363.8px;">Mode</div>
<div class="t" style="top:182.2px;height:20px;line-height:20px;font-size:14px;color:#1a1a1a;left:1482.5px;">Spd/Pwr</div>
<div class="t" style="top:182.2px;height:20px;line-height:20px;font-size:14px;color:#1a1a1a;left:1572px;">Output</div>
<div class="t" style="top:182.2px;height:20px;line-height:20px;font-size:14px;color:#1a1a1a;left:1631.8px;">Show</div>
<div class="t" style="top:182.2px;height:20px;line-height:20px;font-size:14px;color:#1a1a1a;left:1681.8px;">Air</div>
<div style="left:1261.8px;top:205px;width:570.5px;height:42px;background:#dcdcdc;"></div>
<div class="t" style="top:216.5px;height:20px;line-height:20px;font-size:14.5px;color:#000;left:1268.8px;">C01</div>
<div style="left:1310.8px;top:212.5px;width:40.5px;height:27px;background:#3434fb;"></div>
<div class="t" style="top:214.5px;height:24px;line-height:24px;font-size:17px;color:#fff;left:1031px;width:600px;text-align:center;">01</div>
<div style="left:1366.3px;top:210.5px;width:101.7px;height:25.7px;background:#fff;border-radius:5px;box-shadow:0 0 0 0.5px rgba(0,0,0,0.12),0 1px 1.5px rgba(0,0,0,0.20);"></div>
<div class="t" style="top:212.85px;height:20px;line-height:20px;font-size:14px;color:#111;left:1377.5px;">Line</div>
<svg style="left:1446px;top:210.5px;" width="22" height="25.7" viewBox="0 0 22 25.7"><path d="M6.8 9.85 l4.2 -4.2 l4.2 4.2" fill="none" stroke="#333" stroke-width="1.7" stroke-linecap="round" stroke-linejoin="round"/><path d="M6.8 15.85 l4.2 4.2 l4.2 -4.2" fill="none" stroke="#333" stroke-width="1.7" stroke-linecap="round" stroke-linejoin="round"/></svg>
<div class="t" style="top:216.5px;height:20px;line-height:20px;font-size:14.5px;color:#000;left:1484.3px;">100.0 / 20.0</div>
<svg style="left:1584.3px;top:219.5px;" width="21.5" height="13" viewBox="0 0 21.5 13"><rect x="0.700" y="1.400" width="20.1" height="10.2" rx="3.2" fill="#12dc12" stroke="#0b8f0b" stroke-width="1"/><rect x="11.98" y="0.800" width="8.72" height="11.4" rx="3.6" fill="#f5f8f5" stroke="#1a1a1a" stroke-width="1.500"/></svg>
<svg style="left:1638.3px;top:219.5px;" width="21.5" height="13" viewBox="0 0 21.5 13"><rect x="0.700" y="1.400" width="20.1" height="10.2" rx="3.2" fill="#12dc12" stroke="#0b8f0b" stroke-width="1"/><rect x="11.98" y="0.800" width="8.72" height="11.4" rx="3.6" fill="#f5f8f5" stroke="#1a1a1a" stroke-width="1.500"/></svg>
<svg style="left:1741.5px;top:219.5px;" width="21.5" height="13" viewBox="0 0 21.5 13"><rect x="0.700" y="1.400" width="20.1" height="10.2" rx="3.2" fill="#12dc12" stroke="#0b8f0b" stroke-width="1"/><rect x="11.98" y="0.800" width="8.72" height="11.4" rx="3.6" fill="#f5f8f5" stroke="#1a1a1a" stroke-width="1.500"/></svg>
<div class="t" style="top:254.5px;height:20px;line-height:20px;font-size:14.5px;color:#000;left:1268.8px;">C00</div>
<div style="left:1310.8px;top:250.8px;width:40.5px;height:26.5px;background:#000;"></div>
<div class="t" style="top:252.5px;height:24px;line-height:24px;font-size:17px;color:#fff;left:1031px;width:600px;text-align:center;">00</div>
<div class="t" style="top:254.5px;height:20px;line-height:20px;font-size:14.5px;color:#000;left:1365px;">Image</div>
<div class="t" style="top:254.5px;height:20px;line-height:20px;font-size:14.5px;color:#000;left:1484.3px;">100.0 / 25.0</div>
<svg style="left:1584.3px;top:257.5px;" width="21.5" height="13" viewBox="0 0 21.5 13"><rect x="0.700" y="1.400" width="20.1" height="10.2" rx="3.2" fill="#12dc12" stroke="#0b8f0b" stroke-width="1"/><rect x="11.98" y="0.800" width="8.72" height="11.4" rx="3.6" fill="#f5f8f5" stroke="#1a1a1a" stroke-width="1.500"/></svg>
<svg style="left:1638.3px;top:257.5px;" width="21.5" height="13" viewBox="0 0 21.5 13"><rect x="0.700" y="1.400" width="20.1" height="10.2" rx="3.2" fill="#12dc12" stroke="#0b8f0b" stroke-width="1"/><rect x="11.98" y="0.800" width="8.72" height="11.4" rx="3.6" fill="#f5f8f5" stroke="#1a1a1a" stroke-width="1.500"/></svg>
<svg style="left:1741.5px;top:257.5px;" width="21.5" height="13" viewBox="0 0 21.5 13"><rect x="0.700" y="1.400" width="20.1" height="10.2" rx="3.2" fill="#12dc12" stroke="#0b8f0b" stroke-width="1"/><rect x="11.98" y="0.800" width="8.72" height="11.4" rx="3.6" fill="#f5f8f5" stroke="#1a1a1a" stroke-width="1.500"/></svg>
<div style="left:1843.6px;top:210.7px;width:66px;height:26.8px;background:linear-gradient(#fdfdfd,#e6e6e6);border:1px solid #bcbcbc;box-sizing:border-box;"></div>
<svg style="left:1866.6px;top:214.1px;" width="20" height="20" viewBox="0 0 20 20"><path d="M4.500 13.500L10 8l5.500 5.500" fill="none" stroke="#0a0a0a" stroke-width="3.400" stroke-linejoin="miter"/></svg>
<div style="left:1843.6px;top:244.6px;width:66px;height:27.8px;background:linear-gradient(#fdfdfd,#e6e6e6);border:1px solid #bcbcbc;box-sizing:border-box;"></div>
<svg style="left:1866.6px;top:248.5px;" width="20" height="20" viewBox="0 0 20 20"><path d="M4.500 7L10 12.500 15.500 7" fill="none" stroke="#0a0a0a" stroke-width="3.400" stroke-linejoin="miter"/></svg>
<div style="left:1843.6px;top:309.7px;width:66px;height:26.5px;background:linear-gradient(#fdfdfd,#e6e6e6);border:1px solid #bcbcbc;box-sizing:border-box;"></div>
<svg style="left:1866.6px;top:312.95px;" width="20" height="20" viewBox="0 0 20 20"><path d="M2.500 5h15" stroke="#0a0a0a" stroke-width="1.800" stroke-linecap="round"/><path d="M7 4.500v-2.300h6v2.300" fill="none" stroke="#0a0a0a" stroke-width="1.500"/><path d="M4.300 6.500l0.800 12h9.800l0.800-12" fill="none" stroke="#0a0a0a" stroke-width="1.800" stroke-linejoin="round"/><path d="M7.500 8.500v7.500M10 8.500v7.500M12.500 8.500v7.500" stroke="#0a0a0a" stroke-width="1.400"/></svg>
<div style="left:1843.6px;top:373.7px;width:66px;height:27px;background:linear-gradient(#fdfdfd,#e6e6e6);border:1px solid #bcbcbc;box-sizing:border-box;"></div>
<svg style="left:1866.6px;top:377.2px;" width="20" height="20" viewBox="0 0 20 20"><path d="M7.500 4.500L13 10l-5.500 5.500" fill="none" stroke="#0a0a0a" stroke-width="3.400" stroke-linejoin="miter"/></svg>
<div style="left:1843.6px;top:408.2px;width:66px;height:27px;background:linear-gradient(#fdfdfd,#e6e6e6);border:1px solid #bcbcbc;box-sizing:border-box;"></div>
<svg style="left:1866.6px;top:411.7px;" width="20" height="20" viewBox="0 0 20 20"><path d="M12.500 4.500L7 10l5.500 5.500" fill="none" stroke="#0a0a0a" stroke-width="3.400" stroke-linejoin="miter"/></svg>
<div class="t" style="top:479.5px;height:20px;line-height:20px;font-size:14.5px;color:#000;left:1015px;width:600px;text-align:right;">Layer Color</div>
<div style="left:1623.6px;top:477px;width:81.5px;height:23.8px;background:#0000ff;border:1px solid #00005a;box-sizing:border-box;"></div>
<div class="t" style="top:504.7px;height:20px;line-height:20px;font-size:14.5px;color:#000;left:1015px;width:600px;text-align:right;">Pass Count</div>
<div style="left:1625.8px;top:504.8px;width:57.5px;height:19.3px;background:#fff;border:1px solid #c4c4c4;box-sizing:border-box;"></div>
<div class="t" style="top:504.95px;height:20px;line-height:20px;font-size:14.5px;color:#000;left:1077.3px;width:600px;text-align:right;">1</div>
<div style="left:1688px;top:502.5px;width:14.4px;height:24px;background:#f6f6f6;border-radius:5px;box-shadow:0 0 0 0.5px rgba(0,0,0,0.10), 0 1px 1px rgba(0,0,0,0.12);"></div>
<svg style="left:1688px;top:502.5px;" width="14.4" height="24" viewBox="0 0 14.4 24"><path d="M3.6 8.64 l3.6 -3.6 l3.6 3.6" fill="none" stroke="#333" stroke-width="1.6" stroke-linecap="round" stroke-linejoin="round"/><path d="M3.6 15.36 l3.6 3.6 l3.6 -3.6" fill="none" stroke="#333" stroke-width="1.6" stroke-linecap="round" stroke-linejoin="round"/></svg>
<div class="t" style="top:530.5px;height:20px;line-height:20px;font-size:14.5px;color:#b4b4b4;left:1015px;width:600px;text-align:right;">Interval (mm)</div>
<div style="left:1625.8px;top:530.8px;width:57.5px;height:19.3px;background:#fff;border:1px solid #d6d6d6;box-sizing:border-box;"></div>
<div class="t" style="top:530.95px;height:20px;line-height:20px;font-size:14.5px;color:#bcbcbc;left:1077.3px;width:600px;text-align:right;">0.080</div>
<div style="left:1688px;top:528.5px;width:14.4px;height:24px;background:#f6f6f6;border-radius:5px;box-shadow:0 0 0 0.5px rgba(0,0,0,0.10), 0 1px 1px rgba(0,0,0,0.12);"></div>
<svg style="left:1688px;top:528.5px;" width="14.4" height="24" viewBox="0 0 14.4 24"><path d="M3.6 8.64 l3.6 -3.6 l3.6 3.6" fill="none" stroke="#888" stroke-width="1.6" stroke-linecap="round" stroke-linejoin="round"/><path d="M3.6 15.36 l3.6 3.6 l3.6 -3.6" fill="none" stroke="#888" stroke-width="1.6" stroke-linecap="round" stroke-linejoin="round"/></svg>
<div class="t" style="top:479.5px;height:20px;line-height:20px;font-size:14.5px;color:#000;left:1209.5px;width:600px;text-align:right;">Speed (mm/s)</div>
<div style="left:1820.5px;top:479.7px;width:67.3px;height:19.3px;background:#fff;border:1px solid #c4c4c4;box-sizing:border-box;"></div>
<div class="t" style="top:479.85px;height:20px;line-height:20px;font-size:14.5px;color:#000;left:1281.8px;width:600px;text-align:right;">100.00</div>
<div style="left:1892.7px;top:477.2px;width:14.4px;height:24.5px;background:#f6f6f6;border-radius:5px;box-shadow:0 0 0 0.5px rgba(0,0,0,0.10), 0 1px 1px rgba(0,0,0,0.12);"></div>
<svg style="left:1892.7px;top:477.2px;" width="14.4" height="24.5" viewBox="0 0 14.4 24.5"><path d="M3.6 8.82 l3.6 -3.6 l3.6 3.6" fill="none" stroke="#333" stroke-width="1.6" stroke-linecap="round" stroke-linejoin="round"/><path d="M3.6 15.68 l3.6 3.6 l3.6 -3.6" fill="none" stroke="#333" stroke-width="1.6" stroke-linecap="round" stroke-linejoin="round"/></svg>
<div class="t" style="top:504.7px;height:20px;line-height:20px;font-size:14.5px;color:#000;left:1209.5px;width:600px;text-align:right;">Power Max (%)</div>
<div style="left:1820.5px;top:504.9px;width:67.3px;height:19.3px;background:#fff;border:1px solid #c4c4c4;box-sizing:border-box;"></div>
<div class="t" style="top:505.05px;height:20px;line-height:20px;font-size:14.5px;color:#000;left:1281.8px;width:600px;text-align:right;">20.00</div>
<div style="left:1892.7px;top:502.4px;width:14.4px;height:24.5px;background:#f6f6f6;border-radius:5px;box-shadow:0 0 0 0.5px rgba(0,0,0,0.10), 0 1px 1px rgba(0,0,0,0.12);"></div>
<svg style="left:1892.7px;top:502.4px;" width="14.4" height="24.5" viewBox="0 0 14.4 24.5"><path d="M3.6 8.82 l3.6 -3.6 l3.6 3.6" fill="none" stroke="#333" stroke-width="1.6" stroke-linecap="round" stroke-linejoin="round"/><path d="M3.6 15.68 l3.6 3.6 l3.6 -3.6" fill="none" stroke="#333" stroke-width="1.6" stroke-linecap="round" stroke-linejoin="round"/></svg>
<div class="t" style="top:530.5px;height:20px;line-height:20px;font-size:14.5px;color:#000;left:1209.5px;width:600px;text-align:right;">Power Min (%)</div>
<div style="left:1820.5px;top:530.7px;width:67.3px;height:19.3px;background:#fff;border:1px solid #c4c4c4;box-sizing:border-box;"></div>
<div class="t" style="top:530.85px;height:20px;line-height:20px;font-size:14.5px;color:#000;left:1281.8px;width:600px;text-align:right;">20.00</div>
<div style="left:1892.7px;top:528.2px;width:14.4px;height:24.5px;background:#f6f6f6;border-radius:5px;box-shadow:0 0 0 0.5px rgba(0,0,0,0.10), 0 1px 1px rgba(0,0,0,0.12);"></div>
<svg style="left:1892.7px;top:528.2px;" width="14.4" height="24.5" viewBox="0 0 14.4 24.5"><path d="M3.6 8.82 l3.6 -3.6 l3.6 3.6" fill="none" stroke="#333" stroke-width="1.6" stroke-linecap="round" stroke-linejoin="round"/><path d="M3.6 15.68 l3.6 3.6 l3.6 -3.6" fill="none" stroke="#333" stroke-width="1.6" stroke-linecap="round" stroke-linejoin="round"/></svg>
<div class="t" style="top:556.5px;height:20px;line-height:20px;font-size:14.5px;color:#000;left:1209.5px;width:600px;text-align:right;">Material (mm)</div>
<div style="left:1820.5px;top:556.7px;width:67.3px;height:19.3px;background:#fff;border:1px solid #c4c4c4;box-sizing:border-box;"></div>
<div class="t" style="top:556.85px;height:20px;line-height:20px;font-size:14.5px;color:#000;left:1281.8px;width:600px;text-align:right;">0.0</div>
<div style="left:1892.7px;top:554.2px;width:14.4px;height:24.5px;background:#f6f6f6;border-radius:5px;box-shadow:0 0 0 0.5px rgba(0,0,0,0.10), 0 1px 1px rgba(0,0,0,0.12);"></div>
<svg style="left:1892.7px;top:554.2px;" width="14.4" height="24.5" viewBox="0 0 14.4 24.5"><path d="M3.6 8.82 l3.6 -3.6 l3.6 3.6" fill="none" stroke="#333" stroke-width="1.6" stroke-linecap="round" stroke-linejoin="round"/><path d="M3.6 15.68 l3.6 3.6 l3.6 -3.6" fill="none" stroke="#333" stroke-width="1.6" stroke-linecap="round" stroke-linejoin="round"/></svg>
<div style="left:1420px;top:590.6px;width:437.7px;height:25.2px;background:#fff;border-radius:5px;box-shadow:0 0 0 0.500px rgba(0,0,0,0.14),0 1px 1.500px rgba(0,0,0,0.20);"></div>
<div style="left:1577px;top:591.6px;width:1px;height:23.2px;background:#dcdcdc;"></div>
<div style="left:1645.5px;top:591.6px;width:1px;height:23.2px;background:#dcdcdc;"></div>
<div style="left:1727.5px;top:591.6px;width:1px;height:23.2px;background:#dcdcdc;"></div>
<div class="t" style="top:594px;height:20px;line-height:20px;font-size:14.5px;color:#000;left:1205.5px;width:600px;text-align:center;">Shape Properties</div>
<div class="t" style="top:594px;height:20px;line-height:20px;font-size:14.5px;color:#000;left:1312.2px;width:600px;text-align:center;">Move</div>
<div class="t" style="top:594px;height:20px;line-height:20px;font-size:14.5px;color:#000;left:1387px;width:600px;text-align:center;">File List</div>
<div class="t" style="top:594px;height:20px;line-height:20px;font-size:14.5px;color:#000;left:1495.5px;width:600px;text-align:center;">Camera Control</div>
<div style="left:1259px;top:619.3px;width:661px;height:29px;background:linear-gradient(90deg,#000 0%,#2a0808 9%,#6a1616 26%,#8f2020 40%,#c23030 57%,#cf4a2c 72%,#d9662a 88%,#e27a2a 100%);"></div>
<div class="t" style="top:621.5px;height:24px;line-height:24px;font-size:16px;color:#fff;left:1310.5px;">Laser</div>
<div style="left:1270px;top:689px;width:154px;height:26px;background:#fff;border-radius:4.5px;box-shadow:0 0 0 0.5px rgba(0,0,0,0.12),0 1px 1.5px rgba(0,0,0,0.22);"></div>
<div style="left:1431.2px;top:689px;width:155.8px;height:26px;background:#fff;border-radius:4.5px;box-shadow:0 0 0 0.5px rgba(0,0,0,0.12),0 1px 1.5px rgba(0,0,0,0.22);"></div>
<div style="left:1593.8px;top:689px;width:154.4px;height:26px;background:#fff;border-radius:4.5px;box-shadow:0 0 0 0.5px rgba(0,0,0,0.12),0 1px 1.5px rgba(0,0,0,0.22);"></div>
<div style="left:1755px;top:689px;width:154.4px;height:26px;background:#fff;border-radius:4.5px;box-shadow:0 0 0 0.5px rgba(0,0,0,0.12),0 1px 1.5px rgba(0,0,0,0.22);"></div>
<svg style="left:1313.4px;top:691.2px;" width="19" height="21" viewBox="0 0 19 21"><rect x="0" y="0" width="6.800" height="21" fill="#0a0a0a"/><rect x="12.200" y="0" width="6.800" height="21" fill="#0a0a0a"/></svg>
<div class="t" style="top:692.3px;height:20px;line-height:20px;font-size:14.5px;color:#000;left:1342px;">Pause</div>
<div style="left:1478.7px;top:691.2px;width:21.6px;height:21px;background:#0a0a0a;"></div>
<div class="t" style="top:692.3px;height:20px;line-height:20px;font-size:14.5px;color:#000;left:1508.2px;">Stop</div>
<svg style="left:1641px;top:691px;" width="20" height="21.5" viewBox="0 0 20 21.5"><path d="M0 0L19.500 10.700 0 21.500z" fill="#0a0a0a"/></svg>
<div class="t" style="top:692.3px;height:20px;line-height:20px;font-size:14.5px;color:#000;left:1670px;">Start</div>
<svg style="left:1801px;top:690.5px;" width="18" height="22" viewBox="0 0 18 22"><path d="M9 0l8 8.500h-5v3.500h-6v-3.500h-5z" fill="#0a0a0a"/><rect x="6" y="13.500" width="6" height="2.600" fill="#0a0a0a"/><rect x="6" y="17.600" width="6" height="2.400" fill="#0a0a0a"/></svg>
<div class="t" style="top:692.3px;height:20px;line-height:20px;font-size:14.5px;color:#000;left:1829.7px;">Send</div>
<div style="left:1270px;top:734px;width:154px;height:26px;background:#fff;border-radius:4.5px;box-shadow:0 0 0 0.5px rgba(0,0,0,0.12),0 1px 1.5px rgba(0,0,0,0.22);"></div>
<div style="left:1431.2px;top:734px;width:155.8px;height:26px;background:#fff;border-radius:4.5px;box-shadow:0 0 0 0.5px rgba(0,0,0,0.12),0 1px 1.5px rgba(0,0,0,0.22);"></div>
<div style="left:1593.8px;top:734px;width:154.4px;height:26px;background:#fff;border-radius:4.5px;box-shadow:0 0 0 0.5px rgba(0,0,0,0.12),0 1px 1.5px rgba(0,0,0,0.22);"></div>
<div class="t" style="top:737.3px;height:20px;line-height:20px;font-size:14.5px;color:#111;left:1371px;width:600px;text-align:center;">Save RD file</div>
<div style="left:1755px;top:734px;width:154.4px;height:26px;background:#fff;border-radius:4.5px;box-shadow:0 0 0 0.5px rgba(0,0,0,0.12),0 1px 1.5px rgba(0,0,0,0.22);"></div>
<div class="t" style="top:737.3px;height:20px;line-height:20px;font-size:14.5px;color:#111;left:1532.2px;width:600px;text-align:center;">Run RD file</div>
<svg style="left:1312px;top:735.9px;" width="22" height="21" viewBox="0 0 22 21"><path d="M1.500 7.500V1.500h6.500M14 1.500h6.500v6M20.500 13.500v6H14M8 19.500H1.500v-6" fill="none" stroke="#0a0a0a" stroke-width="2.800"/></svg>
<div class="t" style="top:737.3px;height:20px;line-height:20px;font-size:14.5px;color:#000;left:1342px;">Frame</div>
<svg style="left:1473px;top:735.2px;" width="22" height="22" viewBox="0 0 22 22"><circle cx="11" cy="11" r="9.300" fill="none" stroke="#0a0a0a" stroke-width="2.600" stroke-dasharray="7.300 2.440" stroke-dashoffset="3.600"/></svg>
<div class="t" style="top:737.3px;height:20px;line-height:20px;font-size:14.5px;color:#000;left:1503.3px;">Frame</div>
<div style="left:1270px;top:782.8px;width:150.6px;height:25.7px;background:#fff;border-radius:4.5px;box-shadow:0 0 0 0.5px rgba(0,0,0,0.12),0 1px 1.5px rgba(0,0,0,0.22);"></div>
<div style="left:1431.2px;top:782.8px;width:150.5px;height:25.7px;background:#fff;border-radius:4.5px;box-shadow:0 0 0 0.5px rgba(0,0,0,0.12),0 1px 1.5px rgba(0,0,0,0.22);"></div>
<div class="t" style="top:785.95px;height:20px;line-height:20px;font-size:14.5px;color:#111;left:1206.45px;width:600px;text-align:center;">Go to Origin</div>
<svg style="left:1310px;top:784px;" width="23" height="22" viewBox="0 0 23 22"><path d="M1.500 11L11.500 2l10 9" fill="none" stroke="#0a0a0a" stroke-width="2.400" stroke-linejoin="miter"/><path d="M4.500 10v10.500h14V10" fill="none" stroke="#0a0a0a" stroke-width="2.600"/><rect x="9" y="13.500" width="5" height="7" fill="#0a0a0a"/><rect x="4.500" y="2.500" width="2.600" height="5" fill="#0a0a0a"/></svg>
<div class="t" style="top:785.8px;height:20px;line-height:20px;font-size:14.5px;color:#000;left:1341px;">Home</div>
<div class="t" style="top:785.5px;height:20px;line-height:20px;font-size:14.5px;color:#000;left:1143.5px;width:600px;text-align:right;">Start From:</div>
<div style="left:1756.2px;top:781.2px;width:144.7px;height:25.2px;background:#fff;border-radius:5px;box-shadow:0 0 0 0.5px rgba(0,0,0,0.12),0 1px 1.5px rgba(0,0,0,0.20);"></div>
<div class="t" style="top:783.3px;height:20px;line-height:20px;font-size:14.5px;color:#2a6e2a;left:1767.5px;">Absolute Coords</div>
<svg style="left:1878.9px;top:781.2px;" width="22" height="25.2" viewBox="0 0 22 25.2"><path d="M6.8 9.6 l4.2 -4.2 l4.2 4.2" fill="none" stroke="#333" stroke-width="1.7" stroke-linecap="round" stroke-linejoin="round"/><path d="M6.8 15.6 l4.2 4.2 l4.2 -4.2" fill="none" stroke="#333" stroke-width="1.7" stroke-linecap="round" stroke-linejoin="round"/></svg>
<svg style="left:1268.8px;top:818.8px;" width="21.3" height="12.4" viewBox="0 0 21.3 12.4"><rect x="0.700" y="1.400" width="19.9" height="9.6" rx="3.2" fill="#2e2e2e" stroke="#1a1a1a" stroke-width="1"/><rect x="0.8" y="0.800" width="8.62" height="10.8" rx="3.6" fill="#cfcfcf" stroke="#1a1a1a" stroke-width="1.500"/></svg>
<div class="t" style="top:815.5px;height:20px;line-height:20px;font-size:14.5px;color:#b4b4b4;left:1293.6px;">Enable Rotary</div>
<div class="t" style="top:839.7px;height:20px;line-height:20px;font-size:14.5px;color:#000;left:1143.5px;width:600px;text-align:right;">Job Origin</div>
<div style="left:1760.9px;top:818.1px;width:20px;height:20px;border-radius:50%;background:#f3f3f3;box-shadow:0 0 0 0.800px rgba(0,0,0,0.07),0 1px 1px rgba(0,0,0,0.04);"></div>
<div style="left:1807px;top:818.1px;width:20px;height:20px;border-radius:50%;background:#f3f3f3;box-shadow:0 0 0 0.800px rgba(0,0,0,0.07),0 1px 1px rgba(0,0,0,0.04);"></div>
<div style="left:1853px;top:818.1px;width:20px;height:20px;border-radius:50%;background:#f3f3f3;box-shadow:0 0 0 0.800px rgba(0,0,0,0.07),0 1px 1px rgba(0,0,0,0.04);"></div>
<div style="left:1760.9px;top:837.3px;width:20px;height:20px;border-radius:50%;background:#f3f3f3;box-shadow:0 0 0 0.800px rgba(0,0,0,0.07),0 1px 1px rgba(0,0,0,0.04);"></div>
<div style="left:1807px;top:837.3px;width:20px;height:20px;border-radius:50%;background:#f3f3f3;box-shadow:0 0 0 0.800px rgba(0,0,0,0.07),0 1px 1px rgba(0,0,0,0.04);"></div>
<div style="left:1853px;top:837.3px;width:20px;height:20px;border-radius:50%;background:#f3f3f3;box-shadow:0 0 0 0.800px rgba(0,0,0,0.07),0 1px 1px rgba(0,0,0,0.04);"></div>
<div style="left:1760.9px;top:856.5px;width:20px;height:20px;border-radius:50%;background:#f3f3f3;box-shadow:0 0 0 0.800px rgba(0,0,0,0.07),0 1px 1px rgba(0,0,0,0.04);"></div>
<div style="left:1807px;top:856.5px;width:20px;height:20px;border-radius:50%;background:#f3f3f3;box-shadow:0 0 0 0.800px rgba(0,0,0,0.07),0 1px 1px rgba(0,0,0,0.04);"></div>
<div style="left:1853px;top:856.5px;width:20px;height:20px;border-radius:50%;background:#f3f3f3;box-shadow:0 0 0 0.800px rgba(0,0,0,0.07),0 1px 1px rgba(0,0,0,0.04);"></div>
<div style="left:1814px;top:844.3px;width:6px;height:6px;border-radius:50%;background:#8e8e8e;"></div>
<svg style="left:1266px;top:874.2px;" width="21.4" height="12.8" viewBox="0 0 21.4 12.8"><rect x="0.700" y="1.400" width="20" height="10" rx="3.2" fill="#b40808" stroke="#5a0606" stroke-width="1"/><rect x="0.8" y="0.800" width="8.67" height="11.2" rx="3.6" fill="#e6dede" stroke="#1a1a1a" stroke-width="1.500"/></svg>
<div class="t" style="top:871px;height:20px;line-height:20px;font-size:14.5px;color:#000;left:1291px;">Cut Selected Graphics</div>
<svg style="left:1266px;top:898.6px;" width="21.4" height="12.4" viewBox="0 0 21.4 12.4"><rect x="0.700" y="1.400" width="20" height="9.6" rx="3.2" fill="#2e2e2e" stroke="#1a1a1a" stroke-width="1"/><rect x="0.8" y="0.800" width="8.67" height="10.8" rx="3.6" fill="#cfcfcf" stroke="#1a1a1a" stroke-width="1.500"/></svg>
<div class="t" style="top:895.2px;height:20px;line-height:20px;font-size:14.5px;color:#b4b4b4;left:1291px;">Use Selection Origin</div>
<svg style="left:1266px;top:930.8px;" width="21.4" height="12.8" viewBox="0 0 21.4 12.8"><rect x="0.700" y="1.400" width="20" height="10" rx="3.2" fill="#12dc12" stroke="#0b8f0b" stroke-width="1"/><rect x="11.93" y="0.800" width="8.67" height="11.2" rx="3.6" fill="#f5f8f5" stroke="#1a1a1a" stroke-width="1.500"/></svg>
<div class="t" style="top:928px;height:20px;line-height:20px;font-size:14.5px;color:#000;left:1291px;">Optimize Cut Path</div>
<div style="left:1592px;top:892.2px;width:313.5px;height:25.8px;background:#fff;border-radius:4.5px;box-shadow:0 0 0 0.5px rgba(0,0,0,0.12),0 1px 1.5px rgba(0,0,0,0.22);"></div>
<svg style="left:1672.5px;top:894.5px;" width="21.5" height="21.5" viewBox="0 0 21.5 21.5"><path d="M10.700 0.500v4.500M10.700 16.500v4.500M0.500 10.700h4.500M16.500 10.700h4.500" stroke="#0a0a0a" stroke-width="1.900"/><path d="M10.700 6.500v8.400M6.500 10.700h8.400" stroke="#e60000" stroke-width="2.100"/></svg>
<div class="t" style="top:895.3px;height:20px;line-height:20px;font-size:14.5px;color:#000;left:1702.2px;">Show Last Position</div>
<div style="left:1592px;top:925.2px;width:313.5px;height:25.6px;background:#fff;border-radius:4.5px;box-shadow:0 0 0 0.5px rgba(0,0,0,0.12),0 1px 1.5px rgba(0,0,0,0.22);"></div>
<div class="t" style="top:928.3px;height:20px;line-height:20px;font-size:14.5px;color:#111;left:1448.75px;width:600px;text-align:center;">Optimization Settings</div>
<div style="left:1270px;top:974.2px;width:89.5px;height:25.3px;background:#fff;border-radius:4.5px;box-shadow:0 0 0 0.5px rgba(0,0,0,0.12),0 1px 1.5px rgba(0,0,0,0.22);"></div>
<div class="t" style="top:977.15px;height:20px;line-height:20px;font-size:14.5px;color:#111;left:1014.75px;width:600px;text-align:center;">Devices</div>
<div style="left:1372.8px;top:971.6px;width:257.2px;height:25.6px;background:#fff;border-radius:5px;box-shadow:0 0 0 0.5px rgba(0,0,0,0.12),0 1px 1.5px rgba(0,0,0,0.20);"></div>
<div class="t" style="top:973.9px;height:20px;line-height:20px;font-size:14.5px;color:#111;left:1384.6px;">(Auto)</div>
<svg style="left:1608px;top:971.6px;" width="22" height="25.6" viewBox="0 0 22 25.6"><path d="M6.8 9.8 l4.2 -4.2 l4.2 4.2" fill="none" stroke="#333" stroke-width="1.7" stroke-linecap="round" stroke-linejoin="round"/><path d="M6.8 15.8 l4.2 4.2 l4.2 -4.2" fill="none" stroke="#333" stroke-width="1.7" stroke-linecap="round" stroke-linejoin="round"/></svg>
<div style="left:1647.8px;top:971.6px;width:257.7px;height:25.6px;background:#fff;border-radius:5px;box-shadow:0 0 0 0.5px rgba(0,0,0,0.12),0 1px 1.5px rgba(0,0,0,0.20);"></div>
<div class="t" style="top:973.9px;height:20px;line-height:20px;font-size:14.5px;color:#111;left:1659.2px;">MX80-Ruida 6442S-B (EC)</div>
<svg style="left:1883.5px;top:971.6px;" width="22" height="25.6" viewBox="0 0 22 25.6"><path d="M6.8 9.8 l4.2 -4.2 l4.2 4.2" fill="none" stroke="#333" stroke-width="1.7" stroke-linecap="round" stroke-linejoin="round"/><path d="M6.8 15.8 l4.2 4.2 l4.2 -4.2" fill="none" stroke="#333" stroke-width="1.7" stroke-linecap="round" stroke-linejoin="round"/></svg>
<div style="left:1412.3px;top:1058.5px;width:353.5px;height:25.8px;background:#fff;border-radius:5px;box-shadow:0 0 0 0.500px rgba(0,0,0,0.16),0 1px 1px rgba(0,0,0,0.10);overflow:hidden;"><div style="left:0;top:0;width:66px;height:27px;background:#e1e1e1;"></div></div>
<div style="left:1592.3px;top:1059.5px;width:1px;height:23.8px;background:#dcdcdc;"></div>
<div style="left:1669.6px;top:1059.5px;width:1px;height:23.8px;background:#dcdcdc;"></div>
<div class="t" style="top:1062.3px;height:20px;line-height:20px;font-size:14.5px;color:#000;left:1144.5px;width:600px;text-align:center;">Laser</div>
<div class="t" style="top:1062.3px;height:20px;line-height:20px;font-size:14.5px;color:#000;left:1235.8px;width:600px;text-align:center;">Variable Text</div>
<div class="t" style="top:1062.3px;height:20px;line-height:20px;font-size:14.5px;color:#000;left:1331.5px;width:600px;text-align:center;">Library</div>
<div class="t" style="top:1062.3px;height:20px;line-height:20px;font-size:14.5px;color:#000;left:1420.5px;width:600px;text-align:center;">Art Library</div>
<div style="left:0px;top:1085px;width:1920px;height:35px;background:linear-gradient(#efefef,#e2e2e2 45%,#cdcdcd);border-bottom:1px solid #b9b9b9;box-sizing:border-box;"></div>
<svg style="left:8.5px;top:1096px;" width="4" height="11.5" viewBox="0 0 4 11.5"><circle cx="2" cy="1.5" r="1" fill="#9a9a9a"/><circle cx="2" cy="10" r="1" fill="#9a9a9a"/></svg>
<div style="left:17.7px;top:1090.4px;width:24.4px;height:23.6px;background:#000000;"></div>
<div class="t" style="top:1092.5px;height:20px;line-height:20px;font-size:12.6px;color:#fff;left:-270.1px;width:600px;text-align:center;-webkit-text-stroke:0.150px currentColor;">00</div>
<div style="left:50.15px;top:1090.4px;width:24.4px;height:23.6px;background:#0000ff;"></div>
<div class="t" style="top:1092.5px;height:20px;line-height:20px;font-size:12.6px;color:#fff;left:-237.65px;width:600px;text-align:center;-webkit-text-stroke:0.150px currentColor;">01</div>
<div style="left:82.6px;top:1090.4px;width:24.4px;height:23.6px;background:#ff0000;"></div>
<div class="t" style="top:1092.5px;height:20px;line-height:20px;font-size:12.6px;color:#fff;left:-205.2px;width:600px;text-align:center;-webkit-text-stroke:0.150px currentColor;">02</div>
<div style="left:115.05px;top:1090.4px;width:24.4px;height:23.6px;background:#00e000;"></div>
<div class="t" style="top:1092.5px;height:20px;line-height:20px;font-size:12.6px;color:#0b3d0b;left:-172.75px;width:600px;text-align:center;-webkit-text-stroke:0.150px currentColor;">03</div>
<div style="left:147.5px;top:1090.4px;width:24.4px;height:23.6px;background:#d0d000;"></div>
<div class="t" style="top:1092.5px;height:20px;line-height:20px;font-size:12.6px;color:#2e2e00;left:-140.3px;width:600px;text-align:center;-webkit-text-stroke:0.150px currentColor;">04</div>
<div style="left:179.95px;top:1090.4px;width:24.4px;height:23.6px;background:#ff8000;"></div>
<div class="t" style="top:1092.5px;height:20px;line-height:20px;font-size:12.6px;color:#3a1c00;left:-107.85px;width:600px;text-align:center;-webkit-text-stroke:0.150px currentColor;">05</div>
<div style="left:212.4px;top:1090.4px;width:24.4px;height:23.6px;background:#00e0e0;"></div>
<div class="t" style="top:1092.5px;height:20px;line-height:20px;font-size:12.6px;color:#003a3a;left:-75.4px;width:600px;text-align:center;-webkit-text-stroke:0.150px currentColor;">06</div>
<div style="left:244.85px;top:1090.4px;width:24.4px;height:23.6px;background:#ff00ff;"></div>
<div class="t" style="top:1092.5px;height:20px;line-height:20px;font-size:12.6px;color:#fff;left:-42.95px;width:600px;text-align:center;-webkit-text-stroke:0.150px currentColor;">07</div>
<div style="left:277.3px;top:1090.4px;width:24.4px;height:23.6px;background:#b4b4b4;"></div>
<div class="t" style="top:1092.5px;height:20px;line-height:20px;font-size:12.6px;color:#222;left:-10.5px;width:600px;text-align:center;-webkit-text-stroke:0.150px currentColor;">08</div>
<div style="left:309.75px;top:1090.4px;width:24.4px;height:23.6px;background:#0000a0;"></div>
<div class="t" style="top:1092.5px;height:20px;line-height:20px;font-size:12.6px;color:#fff;left:21.95px;width:600px;text-align:center;-webkit-text-stroke:0.150px currentColor;">09</div>
<div style="left:342.2px;top:1090.4px;width:24.4px;height:23.6px;background:#a00000;"></div>
<div class="t" style="top:1092.5px;height:20px;line-height:20px;font-size:12.6px;color:#fff;left:54.4px;width:600px;text-align:center;-webkit-text-stroke:0.150px currentColor;">10</div>
<div style="left:374.65px;top:1090.4px;width:24.4px;height:23.6px;background:#00a000;"></div>
<div class="t" style="top:1092.5px;height:20px;line-height:20px;font-size:12.6px;color:#fff;left:86.85px;width:600px;text-align:center;-webkit-text-stroke:0.150px currentColor;">11</div>
<div style="left:407.1px;top:1090.4px;width:24.4px;height:23.6px;background:#a0a000;"></div>
<div class="t" style="top:1092.5px;height:20px;line-height:20px;font-size:12.6px;color:#262600;left:119.3px;width:600px;text-align:center;-webkit-text-stroke:0.150px currentColor;">12</div>
<div style="left:439.55px;top:1090.4px;width:24.4px;height:23.6px;background:#c08000;"></div>
<div class="t" style="top:1092.5px;height:20px;line-height:20px;font-size:12.6px;color:#2e1e00;left:151.75px;width:600px;text-align:center;-webkit-text-stroke:0.150px currentColor;">13</div>
<div style="left:472px;top:1090.4px;width:24.4px;height:23.6px;background:#00a0ff;"></div>
<div class="t" style="top:1092.5px;height:20px;line-height:20px;font-size:12.6px;color:#fff;left:184.2px;width:600px;text-align:center;-webkit-text-stroke:0.150px currentColor;">14</div>
<div style="left:504.45px;top:1090.4px;width:24.4px;height:23.6px;background:#a000a0;"></div>
<div class="t" style="top:1092.5px;height:20px;line-height:20px;font-size:12.6px;color:#fff;left:216.65px;width:600px;text-align:center;-webkit-text-stroke:0.150px currentColor;">15</div>
<div style="left:536.9px;top:1090.4px;width:24.4px;height:23.6px;background:#808080;"></div>
<div class="t" style="top:1092.5px;height:20px;line-height:20px;font-size:12.6px;color:#fff;left:249.1px;width:600px;text-align:center;-webkit-text-stroke:0.150px currentColor;">16</div>
<div style="left:569.35px;top:1090.4px;width:24.4px;height:23.6px;background:#7d87b9;"></div>
<div class="t" style="top:1092.5px;height:20px;line-height:20px;font-size:12.6px;color:#1c2030;left:281.55px;width:600px;text-align:center;-webkit-text-stroke:0.150px currentColor;">17</div>
<div style="left:601.8px;top:1090.4px;width:24.4px;height:23.6px;background:#bb7784;"></div>
<div class="t" style="top:1092.5px;height:20px;line-height:20px;font-size:12.6px;color:#2e1c20;left:314px;width:600px;text-align:center;-webkit-text-stroke:0.150px currentColor;">18</div>
<div style="left:634.25px;top:1090.4px;width:24.4px;height:23.6px;background:#4a6fe3;"></div>
<div class="t" style="top:1092.5px;height:20px;line-height:20px;font-size:12.6px;color:#fff;left:346.45px;width:600px;text-align:center;-webkit-text-stroke:0.150px currentColor;">19</div>
<div style="left:666.7px;top:1090.4px;width:24.4px;height:23.6px;background:#d33f6a;"></div>
<div class="t" style="top:1092.5px;height:20px;line-height:20px;font-size:12.6px;color:#fff;left:378.9px;width:600px;text-align:center;-webkit-text-stroke:0.150px currentColor;">20</div>
<div style="left:699.15px;top:1090.4px;width:24.4px;height:23.6px;background:#8cd78c;"></div>
<div class="t" style="top:1092.5px;height:20px;line-height:20px;font-size:12.6px;color:#1c301c;left:411.35px;width:600px;text-align:center;-webkit-text-stroke:0.150px currentColor;">21</div>
<div style="left:731.6px;top:1090.4px;width:24.4px;height:23.6px;background:#f0b98d;"></div>
<div class="t" style="top:1092.5px;height:20px;line-height:20px;font-size:12.6px;color:#30241c;left:443.8px;width:600px;text-align:center;-webkit-text-stroke:0.150px currentColor;">22</div>
<div style="left:764.05px;top:1090.4px;width:24.4px;height:23.6px;background:#f6c4e1;"></div>
<div class="t" style="top:1092.5px;height:20px;line-height:20px;font-size:12.6px;color:#30262c;left:476.25px;width:600px;text-align:center;-webkit-text-stroke:0.150px currentColor;">23</div>
<div style="left:796.5px;top:1090.4px;width:24.4px;height:23.6px;background:#fa9ed4;"></div>
<div class="t" style="top:1092.5px;height:20px;line-height:20px;font-size:12.6px;color:#30202a;left:508.7px;width:600px;text-align:center;-webkit-text-stroke:0.150px currentColor;">24</div>
<div style="left:828.95px;top:1090.4px;width:24.4px;height:23.6px;background:#500a78;"></div>
<div class="t" style="top:1092.5px;height:20px;line-height:20px;font-size:12.6px;color:#fff;left:541.15px;width:600px;text-align:center;-webkit-text-stroke:0.150px currentColor;">25</div>
<div style="left:861.4px;top:1090.4px;width:24.4px;height:23.6px;background:#b45a00;"></div>
<div class="t" style="top:1092.5px;height:20px;line-height:20px;font-size:12.6px;color:#fff;left:573.6px;width:600px;text-align:center;-webkit-text-stroke:0.150px currentColor;">26</div>
<div style="left:893.85px;top:1090.4px;width:24.4px;height:23.6px;background:#004754;"></div>
<div class="t" style="top:1092.5px;height:20px;line-height:20px;font-size:12.6px;color:#fff;left:606.05px;width:600px;text-align:center;-webkit-text-stroke:0.150px currentColor;">27</div>
<div style="left:926.3px;top:1090.4px;width:24.4px;height:23.6px;background:#86fa88;"></div>
<div class="t" style="top:1092.5px;height:20px;line-height:20px;font-size:12.6px;color:#1c301c;left:638.5px;width:600px;text-align:center;-webkit-text-stroke:0.150px currentColor;">28</div>
<div style="left:958.75px;top:1090.4px;width:24.4px;height:23.6px;background:#ffdb66;"></div>
<div class="t" style="top:1092.5px;height:20px;line-height:20px;font-size:12.6px;color:#302a14;left:670.95px;width:600px;text-align:center;-webkit-text-stroke:0.150px currentColor;">29</div>
<svg style="left:991.5px;top:1089.5px;" width="4" height="25" viewBox="0 0 4 25"><circle cx="2" cy="1.5" r="0.9" fill="#9a9a9a"/><circle cx="2" cy="5.9" r="0.9" fill="#9a9a9a"/><circle cx="2" cy="10.3" r="0.9" fill="#9a9a9a"/><circle cx="2" cy="14.7" r="0.9" fill="#9a9a9a"/><circle cx="2" cy="19.1" r="0.9" fill="#9a9a9a"/><circle cx="2" cy="23.5" r="0.9" fill="#9a9a9a"/></svg>
<div style="left:1004.8px;top:1090.4px;width:24.4px;height:23.6px;background:#f36926;"></div>
<div class="t" style="top:1092.5px;height:20px;line-height:20px;font-size:12.6px;color:#3a1a00;left:717px;width:600px;text-align:center;-webkit-text-stroke:0.150px currentColor;">T1</div>
<div style="left:1037.8px;top:1090.4px;width:24.4px;height:23.6px;background:#0c96d9;"></div>
<div class="t" style="top:1092.5px;height:20px;line-height:20px;font-size:12.6px;color:#fff;left:750px;width:600px;text-align:center;-webkit-text-stroke:0.150px currentColor;">T2</div>
<div style="left:0px;top:1120px;width:1920px;height:46px;background:linear-gradient(#e9e9e9,#dcdcdc 40%,#bdbdbd);"></div>
<div style="left:895px;top:1127.7px;width:751.6px;height:29.8px;background:#ececec;"></div>
<svg style="left:-0.5px;top:1136.7px;" width="21.3" height="13.1" viewBox="0 0 21.3 13.1"><rect x="0.700" y="1.400" width="19.9" height="10.3" rx="3.2" fill="#12dc12" stroke="#0b8f0b" stroke-width="1"/><rect x="11.88" y="0.800" width="8.62" height="11.5" rx="3.6" fill="#f5f8f5" stroke="#1a1a1a" stroke-width="1.500"/></svg>
<div class="t" style="top:1134.3px;height:20px;line-height:20px;font-size:14.5px;color:#000;left:25px;">Move</div>
<svg style="left:61.5px;top:1136.7px;" width="21" height="13.1" viewBox="0 0 21 13.1"><rect x="0.700" y="1.400" width="19.6" height="10.3" rx="3.2" fill="#12dc12" stroke="#0b8f0b" stroke-width="1"/><rect x="11.72" y="0.800" width="8.48" height="11.5" rx="3.6" fill="#f5f8f5" stroke="#1a1a1a" stroke-width="1.500"/></svg>
<div class="t" style="top:1134.3px;height:20px;line-height:20px;font-size:14.5px;color:#000;left:85.8px;">Size</div>
<svg style="left:113.5px;top:1136.7px;" width="21.3" height="13.1" viewBox="0 0 21.3 13.1"><rect x="0.700" y="1.400" width="19.9" height="10.3" rx="3.2" fill="#12dc12" stroke="#0b8f0b" stroke-width="1"/><rect x="11.88" y="0.800" width="8.62" height="11.5" rx="3.6" fill="#f5f8f5" stroke="#1a1a1a" stroke-width="1.500"/></svg>
<div class="t" style="top:1134.3px;height:20px;line-height:20px;font-size:14.5px;color:#000;left:138.5px;">Rotate</div>
<svg style="left:181.7px;top:1136.7px;" width="20.5" height="13.1" viewBox="0 0 20.5 13.1"><rect x="0.700" y="1.400" width="19.1" height="10.3" rx="3.2" fill="#12dc12" stroke="#0b8f0b" stroke-width="1"/><rect x="11.46" y="0.800" width="8.24" height="11.5" rx="3.6" fill="#f5f8f5" stroke="#1a1a1a" stroke-width="1.500"/></svg>
<div class="t" style="top:1134.3px;height:20px;line-height:20px;font-size:14.5px;color:#000;left:206.3px;">Shear</div>
<div class="t" style="top:1134.3px;height:20px;line-height:20px;font-size:14.5px;color:#000;left:260.4px;">x: 509.00, y: 113.00 mm</div>
<div class="t" style="top:1134.3px;height:20px;line-height:20px;font-size:14.5px;color:#000;left:427.5px;">Min (210.1x, 100.0y) to Max (489.9x, 379.6y)&nbsp;&nbsp;2 objects</div>
<svg style="left:0px;top:0px;" width="6" height="6" viewBox="0 0 6 6"><path d="M0 0h6A6 6 0 0 0 0 6z" fill="#1e1e1e"/></svg>
<svg style="left:1914px;top:0px;" width="6" height="6" viewBox="0 0 6 6"><path d="M6 0H0A6 6 0 0 1 6 6z" fill="#5d9ec4"/></svg>
<svg style="left:0px;top:1159px;" width="7" height="7" viewBox="0 0 7 7"><path d="M0 7h7A7 7 0 0 1 0 0z" fill="#1e1e1e"/></svg>
<svg style="left:1914px;top:1160px;" width="6" height="6" viewBox="0 0 6 6"><path d="M6 6H0A6 6 0 0 0 6 0z" fill="#1e1e1e"/></svg>
<div style="left:914px;top:380px;width:605.3px;height:299.5px;background:#ececec;border-radius:6px 6px 7px 7px;box-shadow:0 0 0 0.800px rgba(0,0,0,0.28),0 22px 42px 2px rgba(0,0,0,0.40),0 3px 9px rgba(0,0,0,0.18);"></div>
<div style="left:914px;top:380px;width:605.3px;height:29.5px;background:linear-gradient(#ebebeb,#d6d6d6);border-radius:6px 6px 0 0;border-bottom:1px solid #bcbcbc;box-sizing:border-box;"></div>
<div style="left:924.4px;top:387.7px;width:16.6px;height:16.6px;border-radius:50%;background:#fc5b57;box-shadow:inset 0 0 0 0.800px #df4640;"></div>
<div style="left:951.7px;top:387.7px;width:16.6px;height:16.6px;border-radius:50%;background:#d8d8d8;box-shadow:inset 0 0 0 0.800px #c6c6c6;"></div>
<div style="left:978.4px;top:387.7px;width:16.6px;height:16.6px;border-radius:50%;background:#34c84a;box-shadow:inset 0 0 0 0.800px #27aa35;"></div>
<div class="t" style="top:384.3px;height:24px;line-height:24px;font-size:18.3px;color:#404040;left:915.7px;width:600px;text-align:center;">Boolean Assistant</div>
<div style="left:941.7px;top:438.3px;width:97.3px;height:46.7px;background:linear-gradient(#fdfdfd,#e6e6e6);border:1px solid #b8b8b8;box-sizing:border-box;"></div>
<div style="left:1054px;top:438.3px;width:98.7px;height:46.7px;background:linear-gradient(#c2c2c2,#dadada);border:1px solid #b8b8b8;box-sizing:border-box;"></div>
<div style="left:1167.7px;top:438.3px;width:97.3px;height:46.7px;background:linear-gradient(#fdfdfd,#e6e6e6);border:1px solid #b8b8b8;box-sizing:border-box;"></div>
<div style="left:1280px;top:438.3px;width:99px;height:46.7px;background:linear-gradient(#fdfdfd,#e6e6e6);border:1px solid #b8b8b8;box-sizing:border-box;"></div>
<div style="left:1394px;top:438.3px;width:97.7px;height:46.7px;background:linear-gradient(#fdfdfd,#e6e6e6);border:1px solid #b8b8b8;box-sizing:border-box;"></div>
<svg style="left:968.35px;top:439.5px;" width="44" height="44" viewBox="0 0 44 44"><path d="M3 2.500h28v10.500h10.500v29h-29v-11.500H3z" fill="none" stroke="#0a0a0a" stroke-width="3.400"/><rect x="13.500" y="13" width="17.500" height="17.500" fill="none" stroke="#0a0a0a" stroke-width="1.900" stroke-dasharray="1.900 1.650"/></svg>
<svg style="left:1081.35px;top:439.5px;" width="44" height="44" viewBox="0 0 44 44"><rect x="3" y="2.500" width="28" height="28" fill="none" stroke="#0a0a0a" stroke-width="1.900" stroke-dasharray="1.900 1.650"/><rect x="13" y="13" width="28.500" height="28.500" fill="none" stroke="#0a0a0a" stroke-width="1.900" stroke-dasharray="1.900 1.650"/><rect x="14" y="13.500" width="17" height="17" fill="none" stroke="#0a0a0a" stroke-width="3.400"/></svg>
<svg style="left:1194.35px;top:439.5px;" width="44" height="44" viewBox="0 0 44 44"><rect x="14.500" y="13.500" width="27" height="28" fill="none" stroke="#0a0a0a" stroke-width="1.900" stroke-dasharray="1.900 1.650"/><path d="M3.500 3h28.500v11h-17.500v17.500h-11z" fill="none" stroke="#0a0a0a" stroke-width="3.400"/></svg>
<svg style="left:1307.5px;top:439.5px;" width="44" height="44" viewBox="0 0 44 44"><rect x="3" y="2.500" width="27.500" height="27.500" fill="none" stroke="#0a0a0a" stroke-width="1.900" stroke-dasharray="1.900 1.650"/><path d="M12.500 30V12.500H31" fill="none" stroke="#0a0a0a" stroke-width="1.900" stroke-dasharray="1.900 1.650"/><path d="M31 12.500h10v29h-28.500v-11h18.500z" fill="none" stroke="#0a0a0a" stroke-width="3.400"/></svg>
<svg style="left:1420.85px;top:439.8px;" width="44" height="44" viewBox="0 0 44 44"><circle cx="22" cy="22" r="21.300" fill="#0a0a0a"/><path d="M6.800 21.300L17.300 13.200C22 10.500 29.500 11 34 16C38 20.500 38.500 27 36 31.500C34.500 34.500 32.500 36.500 30.100 37.600C31.500 34 32 30 30.800 26.100C29.500 22 26.500 19.200 23.400 18.900C22 18.800 20.500 19.300 19.300 20.200L18.200 25.200Z" fill="#fff"/></svg>
<div class="t" style="top:498.5px;height:20px;line-height:20px;font-size:14.5px;color:#000;left:690.35px;width:600px;text-align:center;">Union</div>
<div class="t" style="top:515px;height:20px;line-height:20px;font-size:14.5px;color:#000;left:690.35px;width:600px;text-align:center;">A or B</div>
<div class="t" style="top:498.5px;height:20px;line-height:20px;font-size:14.5px;color:#000;left:803.35px;width:600px;text-align:center;">Intersection</div>
<div class="t" style="top:515px;height:20px;line-height:20px;font-size:14.5px;color:#000;left:803.35px;width:600px;text-align:center;">A and B</div>
<div class="t" style="top:498.5px;height:20px;line-height:20px;font-size:14.5px;color:#000;left:916.35px;width:600px;text-align:center;">Subtract</div>
<div class="t" style="top:515px;height:20px;line-height:20px;font-size:14.5px;color:#000;left:916.35px;width:600px;text-align:center;">A - B</div>
<div class="t" style="top:498.5px;height:20px;line-height:20px;font-size:14.5px;color:#000;left:1029.5px;width:600px;text-align:center;">Subtract</div>
<div class="t" style="top:515px;height:20px;line-height:20px;font-size:14.5px;color:#000;left:1029.5px;width:600px;text-align:center;">B - A</div>
<div style="left:941.5px;top:547.3px;width:550px;height:1px;background:#d2d2d2;"></div>
<div class="t" style="top:564.8px;height:20px;line-height:20px;font-size:14.75px;color:#000;left:941px;">Press a button to view the action.</div>
<div class="t" style="top:581.2px;height:20px;line-height:20px;font-size:14.75px;color:#000;left:941px;">Press 'Ok' to keep the result, or 'Cancel' to discard it.</div>
<div style="left:1287.7px;top:626.7px;width:91.3px;height:26.6px;background:#fff;border-radius:5px;box-shadow:0 0 0 0.5px rgba(0,0,0,0.12),0 1px 1.5px rgba(0,0,0,0.22);"></div>
<div class="t" style="top:630.3px;height:20px;line-height:20px;font-size:14.5px;color:#111;left:1033.35px;width:600px;text-align:center;">Cancel</div>
<div style="left:1399.3px;top:626.7px;width:92.4px;height:26.6px;background:linear-gradient(#4ea2ff,#0a6bff);border-radius:5px;box-shadow:0 0 0 3px rgba(90,160,255,0.32),0 1px 1.500px rgba(0,0,0,0.30);"></div>
<div class="t" style="top:630px;height:20px;line-height:20px;font-size:14.5px;color:#fff;font-weight:bold;left:1145.5px;width:600px;text-align:center;">OK</div>
<div style="left:1065px;top:505px;width:429px;height:21.7px;background:#fcfcfc;box-shadow:0 0 0 0.800px rgba(0,0,0,0.16),0 4px 10px rgba(0,0,0,0.22);"></div>
<div class="t" style="top:505.8px;height:20px;line-height:20px;font-size:15.65px;color:#111;left:1069px;">Keeps the common area shared by the two selected shapes.</div>
<svg style="left:1060px;top:483px;" width="18" height="26" viewBox="0 0 18 26"><path d="M3.300 2v17.500l4-3.700 3 6.800 3-1.300-3-6.700 5.500-0.300z" fill="#111" stroke="#fff" stroke-width="1.500" stroke-linejoin="round"/></svg>
</div></body></html>
